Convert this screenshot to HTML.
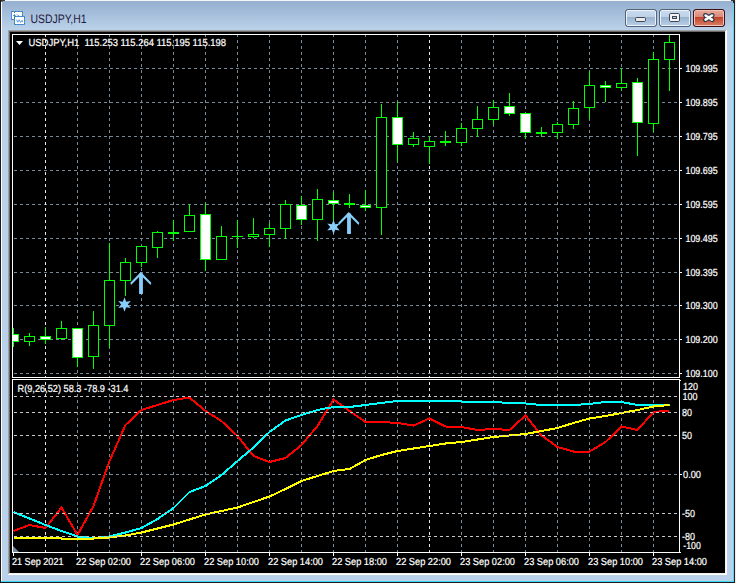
<!DOCTYPE html><html><head><meta charset="utf-8"><style>html,body{margin:0;padding:0;width:736px;height:583px;overflow:hidden;background:#fff}svg{display:block;text-rendering:geometricPrecision}</style></head><body><svg width="736" height="583" viewBox="0 0 736 583" shape-rendering="crispEdges"><defs><linearGradient id="tg" x1="0" y1="0" x2="0" y2="1"><stop offset="0" stop-color="#95afcf"/><stop offset="1" stop-color="#bbd2ea"/></linearGradient><linearGradient id="bt" x1="0" y1="0" x2="0" y2="1"><stop offset="0" stop-color="#c9daee"/><stop offset="1" stop-color="#bdd1e7"/></linearGradient><linearGradient id="bb" x1="0" y1="0" x2="0" y2="1"><stop offset="0" stop-color="#98b2cf"/><stop offset="1" stop-color="#b8cde5"/></linearGradient><linearGradient id="ct" x1="0" y1="0" x2="0" y2="1"><stop offset="0" stop-color="#e6a595"/><stop offset="1" stop-color="#d9897a"/></linearGradient><linearGradient id="cb" x1="0" y1="0" x2="0" y2="1"><stop offset="0" stop-color="#c23f26"/><stop offset="1" stop-color="#d77a5f"/></linearGradient><clipPath id="cm"><rect x="13" y="35" width="666" height="342"/></clipPath><clipPath id="ci"><rect x="13" y="380" width="666" height="172"/></clipPath></defs><rect x="0" y="0" width="736" height="583" fill="#b9d1ea"/><rect x="0" y="0" width="736" height="1" fill="#f4f6f8"/><rect x="1" y="1" width="732" height="29" fill="url(#tg)"/><rect x="0" y="0" width="1" height="583" fill="#1a1a1a"/><rect x="1" y="0" width="4" height="1" fill="#3a3a3a"/><rect x="1" y="1" width="2" height="1" fill="#6a6a6a"/><rect x="1" y="2" width="1" height="579" fill="#ffffff"/><rect x="733" y="3" width="1" height="579" fill="#5ad6f2"/><rect x="733" y="1" width="1" height="2" fill="#202020"/><rect x="1" y="581" width="733" height="1" fill="#3ad8f4"/><rect x="734" y="0" width="1" height="583" fill="#202020"/><rect x="0" y="582" width="735" height="1" fill="#1a1a1a"/><rect x="735" y="0" width="1" height="583" fill="#eeeeee"/><rect x="731" y="0" width="4" height="1" fill="#303030"/><rect x="8" y="30" width="719" height="1" fill="#a0a0a0"/><rect x="8" y="30" width="1" height="545" fill="#a0a0a0"/><rect x="9" y="31" width="717" height="1" fill="#696969"/><rect x="9" y="31" width="1" height="543" fill="#696969"/><rect x="725" y="31" width="1" height="543" fill="#f0f0f0"/><rect x="9" y="573" width="717" height="1" fill="#f0f0f0"/><rect x="726" y="30" width="1" height="545" fill="#ffffff"/><rect x="8" y="574" width="719" height="1" fill="#ffffff"/><rect x="10" y="32" width="715" height="541" fill="#000000"/><rect x="11" y="11" width="12" height="9" fill="#4a8cf6"/><rect x="12" y="12" width="10" height="7" fill="#ffffff"/><rect x="14" y="16" width="11" height="9" fill="#4a8cf6"/><rect x="15" y="17" width="9" height="7" fill="#ffffff"/><path d="M12 11.5h10M12 19.5h2M14.5 12v7M22.5 12v4M15 16.5h9M15 24.5h9M14.5 17v7M24.5 17v7" stroke="#3c8a60" stroke-width="1" stroke-dasharray="1 2" fill="none"/><path d="M13.2 16 L14.4 14.6 L15.6 15.6 M16.8 14.4 L18 15.6 L19.2 16" stroke="#3f82ee" stroke-width="0.9" fill="none" shape-rendering="auto"/><path d="M16.4 19.6 L17.8 22.2 L19.2 19.8 L20.6 22.4 L22 20.4 L22.8 22" stroke="#3f82ee" stroke-width="0.85" fill="none" shape-rendering="auto"/><text x="30.5" y="23" font-family="Liberation Sans, sans-serif" font-size="12.2" fill="#1e2040" textLength="56" lengthAdjust="spacingAndGlyphs">USDJPY,H1</text><rect x="625.5" y="9.5" width="31" height="17" rx="2.5" fill="#56657a" stroke="#56657a" shape-rendering="auto"/><rect x="626.5" y="10.5" width="29" height="15" rx="1.5" fill="none" stroke="#e9f1fa" shape-rendering="auto"/><rect x="627" y="11" width="28" height="6" fill="url(#bt)"/><rect x="627" y="17" width="28" height="8" fill="url(#bb)"/><rect x="659.5" y="9.5" width="31" height="17" rx="2.5" fill="#56657a" stroke="#56657a" shape-rendering="auto"/><rect x="660.5" y="10.5" width="29" height="15" rx="1.5" fill="none" stroke="#e9f1fa" shape-rendering="auto"/><rect x="661" y="11" width="28" height="6" fill="url(#bt)"/><rect x="661" y="17" width="28" height="8" fill="url(#bb)"/><rect x="693.5" y="9.5" width="31" height="17" rx="2.5" fill="#3e0f15" stroke="#3e0f15" shape-rendering="auto"/><rect x="694.5" y="10.5" width="29" height="15" rx="1.5" fill="none" stroke="#f0c4b8" shape-rendering="auto"/><rect x="695" y="11" width="28" height="6" fill="url(#ct)"/><rect x="695" y="17" width="28" height="8" fill="url(#cb)"/><rect x="635.5" y="17.5" width="10" height="4" rx="1.2" fill="#ececec" stroke="#3c4858" stroke-width="1" shape-rendering="auto"/><rect x="669.5" y="13.5" width="10" height="8" rx="1.2" fill="#f4f4f4" stroke="#3c4858" stroke-width="1" shape-rendering="auto"/><rect x="672.5" y="16.5" width="4" height="2" fill="#b9c9da" stroke="#3c4858" stroke-width="1" shape-rendering="crispEdges"/><path d="M705.3 15.3 L712.3 19.8 M712.3 15.3 L705.3 19.8" stroke="#2e3a4a" stroke-width="4.6" stroke-linecap="round" fill="none" shape-rendering="auto"/><path d="M705.6 15.5 L712 19.6 M712 15.5 L705.6 19.6" stroke="#ffffff" stroke-width="2.6" stroke-linecap="round" fill="none" shape-rendering="auto"/><path d="M14 68.5H17M20 68.5H23M26 68.5H29M32 68.5H35M38 68.5H41M44 68.5H47M50 68.5H53M56 68.5H59M62 68.5H65M68 68.5H71M74 68.5H77M80 68.5H83M86 68.5H89M92 68.5H95M98 68.5H101M104 68.5H107M110 68.5H113M116 68.5H119M122 68.5H125M128 68.5H131M134 68.5H137M140 68.5H143M146 68.5H149M152 68.5H155M158 68.5H161M164 68.5H167M170 68.5H173M176 68.5H179M182 68.5H185M188 68.5H191M194 68.5H197M200 68.5H203M206 68.5H209M212 68.5H215M218 68.5H221M224 68.5H227M230 68.5H233M236 68.5H239M242 68.5H245M248 68.5H251M254 68.5H257M260 68.5H263M266 68.5H269M272 68.5H275M278 68.5H281M284 68.5H287M290 68.5H293M296 68.5H299M302 68.5H305M308 68.5H311M314 68.5H317M320 68.5H323M326 68.5H329M332 68.5H335M338 68.5H341M344 68.5H347M350 68.5H353M356 68.5H359M362 68.5H365M368 68.5H371M374 68.5H377M380 68.5H383M386 68.5H389M392 68.5H395M398 68.5H401M404 68.5H407M410 68.5H413M416 68.5H419M422 68.5H425M428 68.5H431M434 68.5H437M440 68.5H443M446 68.5H449M452 68.5H455M458 68.5H461M464 68.5H467M470 68.5H473M476 68.5H479M482 68.5H485M488 68.5H491M494 68.5H497M500 68.5H503M506 68.5H509M512 68.5H515M518 68.5H521M524 68.5H527M530 68.5H533M536 68.5H539M542 68.5H545M548 68.5H551M554 68.5H557M560 68.5H563M566 68.5H569M572 68.5H575M578 68.5H581M584 68.5H587M590 68.5H593M596 68.5H599M602 68.5H605M608 68.5H611M614 68.5H617M620 68.5H623M626 68.5H629M632 68.5H635M638 68.5H641M644 68.5H647M650 68.5H653M656 68.5H659M662 68.5H665M668 68.5H671M674 68.5H677" stroke="#778899" stroke-width="1" fill="none"/><path d="M14 102.5H17M20 102.5H23M26 102.5H29M32 102.5H35M38 102.5H41M44 102.5H47M50 102.5H53M56 102.5H59M62 102.5H65M68 102.5H71M74 102.5H77M80 102.5H83M86 102.5H89M92 102.5H95M98 102.5H101M104 102.5H107M110 102.5H113M116 102.5H119M122 102.5H125M128 102.5H131M134 102.5H137M140 102.5H143M146 102.5H149M152 102.5H155M158 102.5H161M164 102.5H167M170 102.5H173M176 102.5H179M182 102.5H185M188 102.5H191M194 102.5H197M200 102.5H203M206 102.5H209M212 102.5H215M218 102.5H221M224 102.5H227M230 102.5H233M236 102.5H239M242 102.5H245M248 102.5H251M254 102.5H257M260 102.5H263M266 102.5H269M272 102.5H275M278 102.5H281M284 102.5H287M290 102.5H293M296 102.5H299M302 102.5H305M308 102.5H311M314 102.5H317M320 102.5H323M326 102.5H329M332 102.5H335M338 102.5H341M344 102.5H347M350 102.5H353M356 102.5H359M362 102.5H365M368 102.5H371M374 102.5H377M380 102.5H383M386 102.5H389M392 102.5H395M398 102.5H401M404 102.5H407M410 102.5H413M416 102.5H419M422 102.5H425M428 102.5H431M434 102.5H437M440 102.5H443M446 102.5H449M452 102.5H455M458 102.5H461M464 102.5H467M470 102.5H473M476 102.5H479M482 102.5H485M488 102.5H491M494 102.5H497M500 102.5H503M506 102.5H509M512 102.5H515M518 102.5H521M524 102.5H527M530 102.5H533M536 102.5H539M542 102.5H545M548 102.5H551M554 102.5H557M560 102.5H563M566 102.5H569M572 102.5H575M578 102.5H581M584 102.5H587M590 102.5H593M596 102.5H599M602 102.5H605M608 102.5H611M614 102.5H617M620 102.5H623M626 102.5H629M632 102.5H635M638 102.5H641M644 102.5H647M650 102.5H653M656 102.5H659M662 102.5H665M668 102.5H671M674 102.5H677" stroke="#778899" stroke-width="1" fill="none"/><path d="M14 136.5H17M20 136.5H23M26 136.5H29M32 136.5H35M38 136.5H41M44 136.5H47M50 136.5H53M56 136.5H59M62 136.5H65M68 136.5H71M74 136.5H77M80 136.5H83M86 136.5H89M92 136.5H95M98 136.5H101M104 136.5H107M110 136.5H113M116 136.5H119M122 136.5H125M128 136.5H131M134 136.5H137M140 136.5H143M146 136.5H149M152 136.5H155M158 136.5H161M164 136.5H167M170 136.5H173M176 136.5H179M182 136.5H185M188 136.5H191M194 136.5H197M200 136.5H203M206 136.5H209M212 136.5H215M218 136.5H221M224 136.5H227M230 136.5H233M236 136.5H239M242 136.5H245M248 136.5H251M254 136.5H257M260 136.5H263M266 136.5H269M272 136.5H275M278 136.5H281M284 136.5H287M290 136.5H293M296 136.5H299M302 136.5H305M308 136.5H311M314 136.5H317M320 136.5H323M326 136.5H329M332 136.5H335M338 136.5H341M344 136.5H347M350 136.5H353M356 136.5H359M362 136.5H365M368 136.5H371M374 136.5H377M380 136.5H383M386 136.5H389M392 136.5H395M398 136.5H401M404 136.5H407M410 136.5H413M416 136.5H419M422 136.5H425M428 136.5H431M434 136.5H437M440 136.5H443M446 136.5H449M452 136.5H455M458 136.5H461M464 136.5H467M470 136.5H473M476 136.5H479M482 136.5H485M488 136.5H491M494 136.5H497M500 136.5H503M506 136.5H509M512 136.5H515M518 136.5H521M524 136.5H527M530 136.5H533M536 136.5H539M542 136.5H545M548 136.5H551M554 136.5H557M560 136.5H563M566 136.5H569M572 136.5H575M578 136.5H581M584 136.5H587M590 136.5H593M596 136.5H599M602 136.5H605M608 136.5H611M614 136.5H617M620 136.5H623M626 136.5H629M632 136.5H635M638 136.5H641M644 136.5H647M650 136.5H653M656 136.5H659M662 136.5H665M668 136.5H671M674 136.5H677" stroke="#778899" stroke-width="1" fill="none"/><path d="M14 170.5H17M20 170.5H23M26 170.5H29M32 170.5H35M38 170.5H41M44 170.5H47M50 170.5H53M56 170.5H59M62 170.5H65M68 170.5H71M74 170.5H77M80 170.5H83M86 170.5H89M92 170.5H95M98 170.5H101M104 170.5H107M110 170.5H113M116 170.5H119M122 170.5H125M128 170.5H131M134 170.5H137M140 170.5H143M146 170.5H149M152 170.5H155M158 170.5H161M164 170.5H167M170 170.5H173M176 170.5H179M182 170.5H185M188 170.5H191M194 170.5H197M200 170.5H203M206 170.5H209M212 170.5H215M218 170.5H221M224 170.5H227M230 170.5H233M236 170.5H239M242 170.5H245M248 170.5H251M254 170.5H257M260 170.5H263M266 170.5H269M272 170.5H275M278 170.5H281M284 170.5H287M290 170.5H293M296 170.5H299M302 170.5H305M308 170.5H311M314 170.5H317M320 170.5H323M326 170.5H329M332 170.5H335M338 170.5H341M344 170.5H347M350 170.5H353M356 170.5H359M362 170.5H365M368 170.5H371M374 170.5H377M380 170.5H383M386 170.5H389M392 170.5H395M398 170.5H401M404 170.5H407M410 170.5H413M416 170.5H419M422 170.5H425M428 170.5H431M434 170.5H437M440 170.5H443M446 170.5H449M452 170.5H455M458 170.5H461M464 170.5H467M470 170.5H473M476 170.5H479M482 170.5H485M488 170.5H491M494 170.5H497M500 170.5H503M506 170.5H509M512 170.5H515M518 170.5H521M524 170.5H527M530 170.5H533M536 170.5H539M542 170.5H545M548 170.5H551M554 170.5H557M560 170.5H563M566 170.5H569M572 170.5H575M578 170.5H581M584 170.5H587M590 170.5H593M596 170.5H599M602 170.5H605M608 170.5H611M614 170.5H617M620 170.5H623M626 170.5H629M632 170.5H635M638 170.5H641M644 170.5H647M650 170.5H653M656 170.5H659M662 170.5H665M668 170.5H671M674 170.5H677" stroke="#778899" stroke-width="1" fill="none"/><path d="M14 204.5H17M20 204.5H23M26 204.5H29M32 204.5H35M38 204.5H41M44 204.5H47M50 204.5H53M56 204.5H59M62 204.5H65M68 204.5H71M74 204.5H77M80 204.5H83M86 204.5H89M92 204.5H95M98 204.5H101M104 204.5H107M110 204.5H113M116 204.5H119M122 204.5H125M128 204.5H131M134 204.5H137M140 204.5H143M146 204.5H149M152 204.5H155M158 204.5H161M164 204.5H167M170 204.5H173M176 204.5H179M182 204.5H185M188 204.5H191M194 204.5H197M200 204.5H203M206 204.5H209M212 204.5H215M218 204.5H221M224 204.5H227M230 204.5H233M236 204.5H239M242 204.5H245M248 204.5H251M254 204.5H257M260 204.5H263M266 204.5H269M272 204.5H275M278 204.5H281M284 204.5H287M290 204.5H293M296 204.5H299M302 204.5H305M308 204.5H311M314 204.5H317M320 204.5H323M326 204.5H329M332 204.5H335M338 204.5H341M344 204.5H347M350 204.5H353M356 204.5H359M362 204.5H365M368 204.5H371M374 204.5H377M380 204.5H383M386 204.5H389M392 204.5H395M398 204.5H401M404 204.5H407M410 204.5H413M416 204.5H419M422 204.5H425M428 204.5H431M434 204.5H437M440 204.5H443M446 204.5H449M452 204.5H455M458 204.5H461M464 204.5H467M470 204.5H473M476 204.5H479M482 204.5H485M488 204.5H491M494 204.5H497M500 204.5H503M506 204.5H509M512 204.5H515M518 204.5H521M524 204.5H527M530 204.5H533M536 204.5H539M542 204.5H545M548 204.5H551M554 204.5H557M560 204.5H563M566 204.5H569M572 204.5H575M578 204.5H581M584 204.5H587M590 204.5H593M596 204.5H599M602 204.5H605M608 204.5H611M614 204.5H617M620 204.5H623M626 204.5H629M632 204.5H635M638 204.5H641M644 204.5H647M650 204.5H653M656 204.5H659M662 204.5H665M668 204.5H671M674 204.5H677" stroke="#778899" stroke-width="1" fill="none"/><path d="M14 238.5H17M20 238.5H23M26 238.5H29M32 238.5H35M38 238.5H41M44 238.5H47M50 238.5H53M56 238.5H59M62 238.5H65M68 238.5H71M74 238.5H77M80 238.5H83M86 238.5H89M92 238.5H95M98 238.5H101M104 238.5H107M110 238.5H113M116 238.5H119M122 238.5H125M128 238.5H131M134 238.5H137M140 238.5H143M146 238.5H149M152 238.5H155M158 238.5H161M164 238.5H167M170 238.5H173M176 238.5H179M182 238.5H185M188 238.5H191M194 238.5H197M200 238.5H203M206 238.5H209M212 238.5H215M218 238.5H221M224 238.5H227M230 238.5H233M236 238.5H239M242 238.5H245M248 238.5H251M254 238.5H257M260 238.5H263M266 238.5H269M272 238.5H275M278 238.5H281M284 238.5H287M290 238.5H293M296 238.5H299M302 238.5H305M308 238.5H311M314 238.5H317M320 238.5H323M326 238.5H329M332 238.5H335M338 238.5H341M344 238.5H347M350 238.5H353M356 238.5H359M362 238.5H365M368 238.5H371M374 238.5H377M380 238.5H383M386 238.5H389M392 238.5H395M398 238.5H401M404 238.5H407M410 238.5H413M416 238.5H419M422 238.5H425M428 238.5H431M434 238.5H437M440 238.5H443M446 238.5H449M452 238.5H455M458 238.5H461M464 238.5H467M470 238.5H473M476 238.5H479M482 238.5H485M488 238.5H491M494 238.5H497M500 238.5H503M506 238.5H509M512 238.5H515M518 238.5H521M524 238.5H527M530 238.5H533M536 238.5H539M542 238.5H545M548 238.5H551M554 238.5H557M560 238.5H563M566 238.5H569M572 238.5H575M578 238.5H581M584 238.5H587M590 238.5H593M596 238.5H599M602 238.5H605M608 238.5H611M614 238.5H617M620 238.5H623M626 238.5H629M632 238.5H635M638 238.5H641M644 238.5H647M650 238.5H653M656 238.5H659M662 238.5H665M668 238.5H671M674 238.5H677" stroke="#778899" stroke-width="1" fill="none"/><path d="M14 272.5H17M20 272.5H23M26 272.5H29M32 272.5H35M38 272.5H41M44 272.5H47M50 272.5H53M56 272.5H59M62 272.5H65M68 272.5H71M74 272.5H77M80 272.5H83M86 272.5H89M92 272.5H95M98 272.5H101M104 272.5H107M110 272.5H113M116 272.5H119M122 272.5H125M128 272.5H131M134 272.5H137M140 272.5H143M146 272.5H149M152 272.5H155M158 272.5H161M164 272.5H167M170 272.5H173M176 272.5H179M182 272.5H185M188 272.5H191M194 272.5H197M200 272.5H203M206 272.5H209M212 272.5H215M218 272.5H221M224 272.5H227M230 272.5H233M236 272.5H239M242 272.5H245M248 272.5H251M254 272.5H257M260 272.5H263M266 272.5H269M272 272.5H275M278 272.5H281M284 272.5H287M290 272.5H293M296 272.5H299M302 272.5H305M308 272.5H311M314 272.5H317M320 272.5H323M326 272.5H329M332 272.5H335M338 272.5H341M344 272.5H347M350 272.5H353M356 272.5H359M362 272.5H365M368 272.5H371M374 272.5H377M380 272.5H383M386 272.5H389M392 272.5H395M398 272.5H401M404 272.5H407M410 272.5H413M416 272.5H419M422 272.5H425M428 272.5H431M434 272.5H437M440 272.5H443M446 272.5H449M452 272.5H455M458 272.5H461M464 272.5H467M470 272.5H473M476 272.5H479M482 272.5H485M488 272.5H491M494 272.5H497M500 272.5H503M506 272.5H509M512 272.5H515M518 272.5H521M524 272.5H527M530 272.5H533M536 272.5H539M542 272.5H545M548 272.5H551M554 272.5H557M560 272.5H563M566 272.5H569M572 272.5H575M578 272.5H581M584 272.5H587M590 272.5H593M596 272.5H599M602 272.5H605M608 272.5H611M614 272.5H617M620 272.5H623M626 272.5H629M632 272.5H635M638 272.5H641M644 272.5H647M650 272.5H653M656 272.5H659M662 272.5H665M668 272.5H671M674 272.5H677" stroke="#778899" stroke-width="1" fill="none"/><path d="M14 305.5H17M20 305.5H23M26 305.5H29M32 305.5H35M38 305.5H41M44 305.5H47M50 305.5H53M56 305.5H59M62 305.5H65M68 305.5H71M74 305.5H77M80 305.5H83M86 305.5H89M92 305.5H95M98 305.5H101M104 305.5H107M110 305.5H113M116 305.5H119M122 305.5H125M128 305.5H131M134 305.5H137M140 305.5H143M146 305.5H149M152 305.5H155M158 305.5H161M164 305.5H167M170 305.5H173M176 305.5H179M182 305.5H185M188 305.5H191M194 305.5H197M200 305.5H203M206 305.5H209M212 305.5H215M218 305.5H221M224 305.5H227M230 305.5H233M236 305.5H239M242 305.5H245M248 305.5H251M254 305.5H257M260 305.5H263M266 305.5H269M272 305.5H275M278 305.5H281M284 305.5H287M290 305.5H293M296 305.5H299M302 305.5H305M308 305.5H311M314 305.5H317M320 305.5H323M326 305.5H329M332 305.5H335M338 305.5H341M344 305.5H347M350 305.5H353M356 305.5H359M362 305.5H365M368 305.5H371M374 305.5H377M380 305.5H383M386 305.5H389M392 305.5H395M398 305.5H401M404 305.5H407M410 305.5H413M416 305.5H419M422 305.5H425M428 305.5H431M434 305.5H437M440 305.5H443M446 305.5H449M452 305.5H455M458 305.5H461M464 305.5H467M470 305.5H473M476 305.5H479M482 305.5H485M488 305.5H491M494 305.5H497M500 305.5H503M506 305.5H509M512 305.5H515M518 305.5H521M524 305.5H527M530 305.5H533M536 305.5H539M542 305.5H545M548 305.5H551M554 305.5H557M560 305.5H563M566 305.5H569M572 305.5H575M578 305.5H581M584 305.5H587M590 305.5H593M596 305.5H599M602 305.5H605M608 305.5H611M614 305.5H617M620 305.5H623M626 305.5H629M632 305.5H635M638 305.5H641M644 305.5H647M650 305.5H653M656 305.5H659M662 305.5H665M668 305.5H671M674 305.5H677" stroke="#778899" stroke-width="1" fill="none"/><path d="M14 339.5H17M20 339.5H23M26 339.5H29M32 339.5H35M38 339.5H41M44 339.5H47M50 339.5H53M56 339.5H59M62 339.5H65M68 339.5H71M74 339.5H77M80 339.5H83M86 339.5H89M92 339.5H95M98 339.5H101M104 339.5H107M110 339.5H113M116 339.5H119M122 339.5H125M128 339.5H131M134 339.5H137M140 339.5H143M146 339.5H149M152 339.5H155M158 339.5H161M164 339.5H167M170 339.5H173M176 339.5H179M182 339.5H185M188 339.5H191M194 339.5H197M200 339.5H203M206 339.5H209M212 339.5H215M218 339.5H221M224 339.5H227M230 339.5H233M236 339.5H239M242 339.5H245M248 339.5H251M254 339.5H257M260 339.5H263M266 339.5H269M272 339.5H275M278 339.5H281M284 339.5H287M290 339.5H293M296 339.5H299M302 339.5H305M308 339.5H311M314 339.5H317M320 339.5H323M326 339.5H329M332 339.5H335M338 339.5H341M344 339.5H347M350 339.5H353M356 339.5H359M362 339.5H365M368 339.5H371M374 339.5H377M380 339.5H383M386 339.5H389M392 339.5H395M398 339.5H401M404 339.5H407M410 339.5H413M416 339.5H419M422 339.5H425M428 339.5H431M434 339.5H437M440 339.5H443M446 339.5H449M452 339.5H455M458 339.5H461M464 339.5H467M470 339.5H473M476 339.5H479M482 339.5H485M488 339.5H491M494 339.5H497M500 339.5H503M506 339.5H509M512 339.5H515M518 339.5H521M524 339.5H527M530 339.5H533M536 339.5H539M542 339.5H545M548 339.5H551M554 339.5H557M560 339.5H563M566 339.5H569M572 339.5H575M578 339.5H581M584 339.5H587M590 339.5H593M596 339.5H599M602 339.5H605M608 339.5H611M614 339.5H617M620 339.5H623M626 339.5H629M632 339.5H635M638 339.5H641M644 339.5H647M650 339.5H653M656 339.5H659M662 339.5H665M668 339.5H671M674 339.5H677" stroke="#778899" stroke-width="1" fill="none"/><path d="M14 373.5H17M20 373.5H23M26 373.5H29M32 373.5H35M38 373.5H41M44 373.5H47M50 373.5H53M56 373.5H59M62 373.5H65M68 373.5H71M74 373.5H77M80 373.5H83M86 373.5H89M92 373.5H95M98 373.5H101M104 373.5H107M110 373.5H113M116 373.5H119M122 373.5H125M128 373.5H131M134 373.5H137M140 373.5H143M146 373.5H149M152 373.5H155M158 373.5H161M164 373.5H167M170 373.5H173M176 373.5H179M182 373.5H185M188 373.5H191M194 373.5H197M200 373.5H203M206 373.5H209M212 373.5H215M218 373.5H221M224 373.5H227M230 373.5H233M236 373.5H239M242 373.5H245M248 373.5H251M254 373.5H257M260 373.5H263M266 373.5H269M272 373.5H275M278 373.5H281M284 373.5H287M290 373.5H293M296 373.5H299M302 373.5H305M308 373.5H311M314 373.5H317M320 373.5H323M326 373.5H329M332 373.5H335M338 373.5H341M344 373.5H347M350 373.5H353M356 373.5H359M362 373.5H365M368 373.5H371M374 373.5H377M380 373.5H383M386 373.5H389M392 373.5H395M398 373.5H401M404 373.5H407M410 373.5H413M416 373.5H419M422 373.5H425M428 373.5H431M434 373.5H437M440 373.5H443M446 373.5H449M452 373.5H455M458 373.5H461M464 373.5H467M470 373.5H473M476 373.5H479M482 373.5H485M488 373.5H491M494 373.5H497M500 373.5H503M506 373.5H509M512 373.5H515M518 373.5H521M524 373.5H527M530 373.5H533M536 373.5H539M542 373.5H545M548 373.5H551M554 373.5H557M560 373.5H563M566 373.5H569M572 373.5H575M578 373.5H581M584 373.5H587M590 373.5H593M596 373.5H599M602 373.5H605M608 373.5H611M614 373.5H617M620 373.5H623M626 373.5H629M632 373.5H635M638 373.5H641M644 373.5H647M650 373.5H653M656 373.5H659M662 373.5H665M668 373.5H671M674 373.5H677" stroke="#778899" stroke-width="1" fill="none"/><path d="M45.5 35V37M45.5 40V43M45.5 46V49M45.5 52V55M45.5 58V61M45.5 64V67M45.5 70V73M45.5 76V79M45.5 82V85M45.5 88V91M45.5 94V97M45.5 100V103M45.5 106V109M45.5 112V115M45.5 118V121M45.5 124V127M45.5 130V133M45.5 136V139M45.5 142V145M45.5 148V151M45.5 154V157M45.5 160V163M45.5 166V169M45.5 172V175M45.5 178V181M45.5 184V187M45.5 190V193M45.5 196V199M45.5 202V205M45.5 208V211M45.5 214V217M45.5 220V223M45.5 226V229M45.5 232V235M45.5 238V241M45.5 244V247M45.5 250V253M45.5 256V259M45.5 262V265M45.5 268V271M45.5 274V277M45.5 280V283M45.5 286V289M45.5 292V295M45.5 298V301M45.5 304V307M45.5 310V313M45.5 316V319M45.5 322V325M45.5 328V331M45.5 334V337M45.5 340V343M45.5 346V349M45.5 352V355M45.5 358V361M45.5 364V367M45.5 370V373M45.5 376V377" stroke="#e8e8e8" stroke-width="1" fill="none"/><path d="M45.5 382V385M45.5 388V391M45.5 394V397M45.5 400V403M45.5 406V409M45.5 412V415M45.5 418V421M45.5 424V427M45.5 430V433M45.5 436V439M45.5 442V445M45.5 448V451M45.5 454V457M45.5 460V463M45.5 466V469M45.5 472V475M45.5 478V481M45.5 484V487M45.5 490V493M45.5 496V499M45.5 502V505M45.5 508V511M45.5 514V517M45.5 520V523M45.5 526V529M45.5 532V535M45.5 538V541M45.5 544V547M45.5 550V552" stroke="#e8e8e8" stroke-width="1" fill="none"/><path d="M77.5 35V37M77.5 40V43M77.5 46V49M77.5 52V55M77.5 58V61M77.5 64V67M77.5 70V73M77.5 76V79M77.5 82V85M77.5 88V91M77.5 94V97M77.5 100V103M77.5 106V109M77.5 112V115M77.5 118V121M77.5 124V127M77.5 130V133M77.5 136V139M77.5 142V145M77.5 148V151M77.5 154V157M77.5 160V163M77.5 166V169M77.5 172V175M77.5 178V181M77.5 184V187M77.5 190V193M77.5 196V199M77.5 202V205M77.5 208V211M77.5 214V217M77.5 220V223M77.5 226V229M77.5 232V235M77.5 238V241M77.5 244V247M77.5 250V253M77.5 256V259M77.5 262V265M77.5 268V271M77.5 274V277M77.5 280V283M77.5 286V289M77.5 292V295M77.5 298V301M77.5 304V307M77.5 310V313M77.5 316V319M77.5 322V325M77.5 328V331M77.5 334V337M77.5 340V343M77.5 346V349M77.5 352V355M77.5 358V361M77.5 364V367M77.5 370V373M77.5 376V377" stroke="#778899" stroke-width="1" fill="none"/><path d="M77.5 382V385M77.5 388V391M77.5 394V397M77.5 400V403M77.5 406V409M77.5 412V415M77.5 418V421M77.5 424V427M77.5 430V433M77.5 436V439M77.5 442V445M77.5 448V451M77.5 454V457M77.5 460V463M77.5 466V469M77.5 472V475M77.5 478V481M77.5 484V487M77.5 490V493M77.5 496V499M77.5 502V505M77.5 508V511M77.5 514V517M77.5 520V523M77.5 526V529M77.5 532V535M77.5 538V541M77.5 544V547M77.5 550V552" stroke="#778899" stroke-width="1" fill="none"/><path d="M109.5 35V37M109.5 40V43M109.5 46V49M109.5 52V55M109.5 58V61M109.5 64V67M109.5 70V73M109.5 76V79M109.5 82V85M109.5 88V91M109.5 94V97M109.5 100V103M109.5 106V109M109.5 112V115M109.5 118V121M109.5 124V127M109.5 130V133M109.5 136V139M109.5 142V145M109.5 148V151M109.5 154V157M109.5 160V163M109.5 166V169M109.5 172V175M109.5 178V181M109.5 184V187M109.5 190V193M109.5 196V199M109.5 202V205M109.5 208V211M109.5 214V217M109.5 220V223M109.5 226V229M109.5 232V235M109.5 238V241M109.5 244V247M109.5 250V253M109.5 256V259M109.5 262V265M109.5 268V271M109.5 274V277M109.5 280V283M109.5 286V289M109.5 292V295M109.5 298V301M109.5 304V307M109.5 310V313M109.5 316V319M109.5 322V325M109.5 328V331M109.5 334V337M109.5 340V343M109.5 346V349M109.5 352V355M109.5 358V361M109.5 364V367M109.5 370V373M109.5 376V377" stroke="#778899" stroke-width="1" fill="none"/><path d="M109.5 382V385M109.5 388V391M109.5 394V397M109.5 400V403M109.5 406V409M109.5 412V415M109.5 418V421M109.5 424V427M109.5 430V433M109.5 436V439M109.5 442V445M109.5 448V451M109.5 454V457M109.5 460V463M109.5 466V469M109.5 472V475M109.5 478V481M109.5 484V487M109.5 490V493M109.5 496V499M109.5 502V505M109.5 508V511M109.5 514V517M109.5 520V523M109.5 526V529M109.5 532V535M109.5 538V541M109.5 544V547M109.5 550V552" stroke="#778899" stroke-width="1" fill="none"/><path d="M141.5 35V37M141.5 40V43M141.5 46V49M141.5 52V55M141.5 58V61M141.5 64V67M141.5 70V73M141.5 76V79M141.5 82V85M141.5 88V91M141.5 94V97M141.5 100V103M141.5 106V109M141.5 112V115M141.5 118V121M141.5 124V127M141.5 130V133M141.5 136V139M141.5 142V145M141.5 148V151M141.5 154V157M141.5 160V163M141.5 166V169M141.5 172V175M141.5 178V181M141.5 184V187M141.5 190V193M141.5 196V199M141.5 202V205M141.5 208V211M141.5 214V217M141.5 220V223M141.5 226V229M141.5 232V235M141.5 238V241M141.5 244V247M141.5 250V253M141.5 256V259M141.5 262V265M141.5 268V271M141.5 274V277M141.5 280V283M141.5 286V289M141.5 292V295M141.5 298V301M141.5 304V307M141.5 310V313M141.5 316V319M141.5 322V325M141.5 328V331M141.5 334V337M141.5 340V343M141.5 346V349M141.5 352V355M141.5 358V361M141.5 364V367M141.5 370V373M141.5 376V377" stroke="#778899" stroke-width="1" fill="none"/><path d="M141.5 382V385M141.5 388V391M141.5 394V397M141.5 400V403M141.5 406V409M141.5 412V415M141.5 418V421M141.5 424V427M141.5 430V433M141.5 436V439M141.5 442V445M141.5 448V451M141.5 454V457M141.5 460V463M141.5 466V469M141.5 472V475M141.5 478V481M141.5 484V487M141.5 490V493M141.5 496V499M141.5 502V505M141.5 508V511M141.5 514V517M141.5 520V523M141.5 526V529M141.5 532V535M141.5 538V541M141.5 544V547M141.5 550V552" stroke="#778899" stroke-width="1" fill="none"/><path d="M173.5 35V37M173.5 40V43M173.5 46V49M173.5 52V55M173.5 58V61M173.5 64V67M173.5 70V73M173.5 76V79M173.5 82V85M173.5 88V91M173.5 94V97M173.5 100V103M173.5 106V109M173.5 112V115M173.5 118V121M173.5 124V127M173.5 130V133M173.5 136V139M173.5 142V145M173.5 148V151M173.5 154V157M173.5 160V163M173.5 166V169M173.5 172V175M173.5 178V181M173.5 184V187M173.5 190V193M173.5 196V199M173.5 202V205M173.5 208V211M173.5 214V217M173.5 220V223M173.5 226V229M173.5 232V235M173.5 238V241M173.5 244V247M173.5 250V253M173.5 256V259M173.5 262V265M173.5 268V271M173.5 274V277M173.5 280V283M173.5 286V289M173.5 292V295M173.5 298V301M173.5 304V307M173.5 310V313M173.5 316V319M173.5 322V325M173.5 328V331M173.5 334V337M173.5 340V343M173.5 346V349M173.5 352V355M173.5 358V361M173.5 364V367M173.5 370V373M173.5 376V377" stroke="#778899" stroke-width="1" fill="none"/><path d="M173.5 382V385M173.5 388V391M173.5 394V397M173.5 400V403M173.5 406V409M173.5 412V415M173.5 418V421M173.5 424V427M173.5 430V433M173.5 436V439M173.5 442V445M173.5 448V451M173.5 454V457M173.5 460V463M173.5 466V469M173.5 472V475M173.5 478V481M173.5 484V487M173.5 490V493M173.5 496V499M173.5 502V505M173.5 508V511M173.5 514V517M173.5 520V523M173.5 526V529M173.5 532V535M173.5 538V541M173.5 544V547M173.5 550V552" stroke="#778899" stroke-width="1" fill="none"/><path d="M205.5 35V37M205.5 40V43M205.5 46V49M205.5 52V55M205.5 58V61M205.5 64V67M205.5 70V73M205.5 76V79M205.5 82V85M205.5 88V91M205.5 94V97M205.5 100V103M205.5 106V109M205.5 112V115M205.5 118V121M205.5 124V127M205.5 130V133M205.5 136V139M205.5 142V145M205.5 148V151M205.5 154V157M205.5 160V163M205.5 166V169M205.5 172V175M205.5 178V181M205.5 184V187M205.5 190V193M205.5 196V199M205.5 202V205M205.5 208V211M205.5 214V217M205.5 220V223M205.5 226V229M205.5 232V235M205.5 238V241M205.5 244V247M205.5 250V253M205.5 256V259M205.5 262V265M205.5 268V271M205.5 274V277M205.5 280V283M205.5 286V289M205.5 292V295M205.5 298V301M205.5 304V307M205.5 310V313M205.5 316V319M205.5 322V325M205.5 328V331M205.5 334V337M205.5 340V343M205.5 346V349M205.5 352V355M205.5 358V361M205.5 364V367M205.5 370V373M205.5 376V377" stroke="#778899" stroke-width="1" fill="none"/><path d="M205.5 382V385M205.5 388V391M205.5 394V397M205.5 400V403M205.5 406V409M205.5 412V415M205.5 418V421M205.5 424V427M205.5 430V433M205.5 436V439M205.5 442V445M205.5 448V451M205.5 454V457M205.5 460V463M205.5 466V469M205.5 472V475M205.5 478V481M205.5 484V487M205.5 490V493M205.5 496V499M205.5 502V505M205.5 508V511M205.5 514V517M205.5 520V523M205.5 526V529M205.5 532V535M205.5 538V541M205.5 544V547M205.5 550V552" stroke="#778899" stroke-width="1" fill="none"/><path d="M237.5 35V37M237.5 40V43M237.5 46V49M237.5 52V55M237.5 58V61M237.5 64V67M237.5 70V73M237.5 76V79M237.5 82V85M237.5 88V91M237.5 94V97M237.5 100V103M237.5 106V109M237.5 112V115M237.5 118V121M237.5 124V127M237.5 130V133M237.5 136V139M237.5 142V145M237.5 148V151M237.5 154V157M237.5 160V163M237.5 166V169M237.5 172V175M237.5 178V181M237.5 184V187M237.5 190V193M237.5 196V199M237.5 202V205M237.5 208V211M237.5 214V217M237.5 220V223M237.5 226V229M237.5 232V235M237.5 238V241M237.5 244V247M237.5 250V253M237.5 256V259M237.5 262V265M237.5 268V271M237.5 274V277M237.5 280V283M237.5 286V289M237.5 292V295M237.5 298V301M237.5 304V307M237.5 310V313M237.5 316V319M237.5 322V325M237.5 328V331M237.5 334V337M237.5 340V343M237.5 346V349M237.5 352V355M237.5 358V361M237.5 364V367M237.5 370V373M237.5 376V377" stroke="#778899" stroke-width="1" fill="none"/><path d="M237.5 382V385M237.5 388V391M237.5 394V397M237.5 400V403M237.5 406V409M237.5 412V415M237.5 418V421M237.5 424V427M237.5 430V433M237.5 436V439M237.5 442V445M237.5 448V451M237.5 454V457M237.5 460V463M237.5 466V469M237.5 472V475M237.5 478V481M237.5 484V487M237.5 490V493M237.5 496V499M237.5 502V505M237.5 508V511M237.5 514V517M237.5 520V523M237.5 526V529M237.5 532V535M237.5 538V541M237.5 544V547M237.5 550V552" stroke="#778899" stroke-width="1" fill="none"/><path d="M269.5 35V37M269.5 40V43M269.5 46V49M269.5 52V55M269.5 58V61M269.5 64V67M269.5 70V73M269.5 76V79M269.5 82V85M269.5 88V91M269.5 94V97M269.5 100V103M269.5 106V109M269.5 112V115M269.5 118V121M269.5 124V127M269.5 130V133M269.5 136V139M269.5 142V145M269.5 148V151M269.5 154V157M269.5 160V163M269.5 166V169M269.5 172V175M269.5 178V181M269.5 184V187M269.5 190V193M269.5 196V199M269.5 202V205M269.5 208V211M269.5 214V217M269.5 220V223M269.5 226V229M269.5 232V235M269.5 238V241M269.5 244V247M269.5 250V253M269.5 256V259M269.5 262V265M269.5 268V271M269.5 274V277M269.5 280V283M269.5 286V289M269.5 292V295M269.5 298V301M269.5 304V307M269.5 310V313M269.5 316V319M269.5 322V325M269.5 328V331M269.5 334V337M269.5 340V343M269.5 346V349M269.5 352V355M269.5 358V361M269.5 364V367M269.5 370V373M269.5 376V377" stroke="#778899" stroke-width="1" fill="none"/><path d="M269.5 382V385M269.5 388V391M269.5 394V397M269.5 400V403M269.5 406V409M269.5 412V415M269.5 418V421M269.5 424V427M269.5 430V433M269.5 436V439M269.5 442V445M269.5 448V451M269.5 454V457M269.5 460V463M269.5 466V469M269.5 472V475M269.5 478V481M269.5 484V487M269.5 490V493M269.5 496V499M269.5 502V505M269.5 508V511M269.5 514V517M269.5 520V523M269.5 526V529M269.5 532V535M269.5 538V541M269.5 544V547M269.5 550V552" stroke="#778899" stroke-width="1" fill="none"/><path d="M301.5 35V37M301.5 40V43M301.5 46V49M301.5 52V55M301.5 58V61M301.5 64V67M301.5 70V73M301.5 76V79M301.5 82V85M301.5 88V91M301.5 94V97M301.5 100V103M301.5 106V109M301.5 112V115M301.5 118V121M301.5 124V127M301.5 130V133M301.5 136V139M301.5 142V145M301.5 148V151M301.5 154V157M301.5 160V163M301.5 166V169M301.5 172V175M301.5 178V181M301.5 184V187M301.5 190V193M301.5 196V199M301.5 202V205M301.5 208V211M301.5 214V217M301.5 220V223M301.5 226V229M301.5 232V235M301.5 238V241M301.5 244V247M301.5 250V253M301.5 256V259M301.5 262V265M301.5 268V271M301.5 274V277M301.5 280V283M301.5 286V289M301.5 292V295M301.5 298V301M301.5 304V307M301.5 310V313M301.5 316V319M301.5 322V325M301.5 328V331M301.5 334V337M301.5 340V343M301.5 346V349M301.5 352V355M301.5 358V361M301.5 364V367M301.5 370V373M301.5 376V377" stroke="#778899" stroke-width="1" fill="none"/><path d="M301.5 382V385M301.5 388V391M301.5 394V397M301.5 400V403M301.5 406V409M301.5 412V415M301.5 418V421M301.5 424V427M301.5 430V433M301.5 436V439M301.5 442V445M301.5 448V451M301.5 454V457M301.5 460V463M301.5 466V469M301.5 472V475M301.5 478V481M301.5 484V487M301.5 490V493M301.5 496V499M301.5 502V505M301.5 508V511M301.5 514V517M301.5 520V523M301.5 526V529M301.5 532V535M301.5 538V541M301.5 544V547M301.5 550V552" stroke="#778899" stroke-width="1" fill="none"/><path d="M333.5 35V37M333.5 40V43M333.5 46V49M333.5 52V55M333.5 58V61M333.5 64V67M333.5 70V73M333.5 76V79M333.5 82V85M333.5 88V91M333.5 94V97M333.5 100V103M333.5 106V109M333.5 112V115M333.5 118V121M333.5 124V127M333.5 130V133M333.5 136V139M333.5 142V145M333.5 148V151M333.5 154V157M333.5 160V163M333.5 166V169M333.5 172V175M333.5 178V181M333.5 184V187M333.5 190V193M333.5 196V199M333.5 202V205M333.5 208V211M333.5 214V217M333.5 220V223M333.5 226V229M333.5 232V235M333.5 238V241M333.5 244V247M333.5 250V253M333.5 256V259M333.5 262V265M333.5 268V271M333.5 274V277M333.5 280V283M333.5 286V289M333.5 292V295M333.5 298V301M333.5 304V307M333.5 310V313M333.5 316V319M333.5 322V325M333.5 328V331M333.5 334V337M333.5 340V343M333.5 346V349M333.5 352V355M333.5 358V361M333.5 364V367M333.5 370V373M333.5 376V377" stroke="#778899" stroke-width="1" fill="none"/><path d="M333.5 382V385M333.5 388V391M333.5 394V397M333.5 400V403M333.5 406V409M333.5 412V415M333.5 418V421M333.5 424V427M333.5 430V433M333.5 436V439M333.5 442V445M333.5 448V451M333.5 454V457M333.5 460V463M333.5 466V469M333.5 472V475M333.5 478V481M333.5 484V487M333.5 490V493M333.5 496V499M333.5 502V505M333.5 508V511M333.5 514V517M333.5 520V523M333.5 526V529M333.5 532V535M333.5 538V541M333.5 544V547M333.5 550V552" stroke="#778899" stroke-width="1" fill="none"/><path d="M365.5 35V37M365.5 40V43M365.5 46V49M365.5 52V55M365.5 58V61M365.5 64V67M365.5 70V73M365.5 76V79M365.5 82V85M365.5 88V91M365.5 94V97M365.5 100V103M365.5 106V109M365.5 112V115M365.5 118V121M365.5 124V127M365.5 130V133M365.5 136V139M365.5 142V145M365.5 148V151M365.5 154V157M365.5 160V163M365.5 166V169M365.5 172V175M365.5 178V181M365.5 184V187M365.5 190V193M365.5 196V199M365.5 202V205M365.5 208V211M365.5 214V217M365.5 220V223M365.5 226V229M365.5 232V235M365.5 238V241M365.5 244V247M365.5 250V253M365.5 256V259M365.5 262V265M365.5 268V271M365.5 274V277M365.5 280V283M365.5 286V289M365.5 292V295M365.5 298V301M365.5 304V307M365.5 310V313M365.5 316V319M365.5 322V325M365.5 328V331M365.5 334V337M365.5 340V343M365.5 346V349M365.5 352V355M365.5 358V361M365.5 364V367M365.5 370V373M365.5 376V377" stroke="#778899" stroke-width="1" fill="none"/><path d="M365.5 382V385M365.5 388V391M365.5 394V397M365.5 400V403M365.5 406V409M365.5 412V415M365.5 418V421M365.5 424V427M365.5 430V433M365.5 436V439M365.5 442V445M365.5 448V451M365.5 454V457M365.5 460V463M365.5 466V469M365.5 472V475M365.5 478V481M365.5 484V487M365.5 490V493M365.5 496V499M365.5 502V505M365.5 508V511M365.5 514V517M365.5 520V523M365.5 526V529M365.5 532V535M365.5 538V541M365.5 544V547M365.5 550V552" stroke="#778899" stroke-width="1" fill="none"/><path d="M397.5 35V37M397.5 40V43M397.5 46V49M397.5 52V55M397.5 58V61M397.5 64V67M397.5 70V73M397.5 76V79M397.5 82V85M397.5 88V91M397.5 94V97M397.5 100V103M397.5 106V109M397.5 112V115M397.5 118V121M397.5 124V127M397.5 130V133M397.5 136V139M397.5 142V145M397.5 148V151M397.5 154V157M397.5 160V163M397.5 166V169M397.5 172V175M397.5 178V181M397.5 184V187M397.5 190V193M397.5 196V199M397.5 202V205M397.5 208V211M397.5 214V217M397.5 220V223M397.5 226V229M397.5 232V235M397.5 238V241M397.5 244V247M397.5 250V253M397.5 256V259M397.5 262V265M397.5 268V271M397.5 274V277M397.5 280V283M397.5 286V289M397.5 292V295M397.5 298V301M397.5 304V307M397.5 310V313M397.5 316V319M397.5 322V325M397.5 328V331M397.5 334V337M397.5 340V343M397.5 346V349M397.5 352V355M397.5 358V361M397.5 364V367M397.5 370V373M397.5 376V377" stroke="#778899" stroke-width="1" fill="none"/><path d="M397.5 382V385M397.5 388V391M397.5 394V397M397.5 400V403M397.5 406V409M397.5 412V415M397.5 418V421M397.5 424V427M397.5 430V433M397.5 436V439M397.5 442V445M397.5 448V451M397.5 454V457M397.5 460V463M397.5 466V469M397.5 472V475M397.5 478V481M397.5 484V487M397.5 490V493M397.5 496V499M397.5 502V505M397.5 508V511M397.5 514V517M397.5 520V523M397.5 526V529M397.5 532V535M397.5 538V541M397.5 544V547M397.5 550V552" stroke="#778899" stroke-width="1" fill="none"/><path d="M429.5 35V37M429.5 40V43M429.5 46V49M429.5 52V55M429.5 58V61M429.5 64V67M429.5 70V73M429.5 76V79M429.5 82V85M429.5 88V91M429.5 94V97M429.5 100V103M429.5 106V109M429.5 112V115M429.5 118V121M429.5 124V127M429.5 130V133M429.5 136V139M429.5 142V145M429.5 148V151M429.5 154V157M429.5 160V163M429.5 166V169M429.5 172V175M429.5 178V181M429.5 184V187M429.5 190V193M429.5 196V199M429.5 202V205M429.5 208V211M429.5 214V217M429.5 220V223M429.5 226V229M429.5 232V235M429.5 238V241M429.5 244V247M429.5 250V253M429.5 256V259M429.5 262V265M429.5 268V271M429.5 274V277M429.5 280V283M429.5 286V289M429.5 292V295M429.5 298V301M429.5 304V307M429.5 310V313M429.5 316V319M429.5 322V325M429.5 328V331M429.5 334V337M429.5 340V343M429.5 346V349M429.5 352V355M429.5 358V361M429.5 364V367M429.5 370V373M429.5 376V377" stroke="#e8e8e8" stroke-width="1" fill="none"/><path d="M429.5 382V385M429.5 388V391M429.5 394V397M429.5 400V403M429.5 406V409M429.5 412V415M429.5 418V421M429.5 424V427M429.5 430V433M429.5 436V439M429.5 442V445M429.5 448V451M429.5 454V457M429.5 460V463M429.5 466V469M429.5 472V475M429.5 478V481M429.5 484V487M429.5 490V493M429.5 496V499M429.5 502V505M429.5 508V511M429.5 514V517M429.5 520V523M429.5 526V529M429.5 532V535M429.5 538V541M429.5 544V547M429.5 550V552" stroke="#e8e8e8" stroke-width="1" fill="none"/><path d="M461.5 35V37M461.5 40V43M461.5 46V49M461.5 52V55M461.5 58V61M461.5 64V67M461.5 70V73M461.5 76V79M461.5 82V85M461.5 88V91M461.5 94V97M461.5 100V103M461.5 106V109M461.5 112V115M461.5 118V121M461.5 124V127M461.5 130V133M461.5 136V139M461.5 142V145M461.5 148V151M461.5 154V157M461.5 160V163M461.5 166V169M461.5 172V175M461.5 178V181M461.5 184V187M461.5 190V193M461.5 196V199M461.5 202V205M461.5 208V211M461.5 214V217M461.5 220V223M461.5 226V229M461.5 232V235M461.5 238V241M461.5 244V247M461.5 250V253M461.5 256V259M461.5 262V265M461.5 268V271M461.5 274V277M461.5 280V283M461.5 286V289M461.5 292V295M461.5 298V301M461.5 304V307M461.5 310V313M461.5 316V319M461.5 322V325M461.5 328V331M461.5 334V337M461.5 340V343M461.5 346V349M461.5 352V355M461.5 358V361M461.5 364V367M461.5 370V373M461.5 376V377" stroke="#778899" stroke-width="1" fill="none"/><path d="M461.5 382V385M461.5 388V391M461.5 394V397M461.5 400V403M461.5 406V409M461.5 412V415M461.5 418V421M461.5 424V427M461.5 430V433M461.5 436V439M461.5 442V445M461.5 448V451M461.5 454V457M461.5 460V463M461.5 466V469M461.5 472V475M461.5 478V481M461.5 484V487M461.5 490V493M461.5 496V499M461.5 502V505M461.5 508V511M461.5 514V517M461.5 520V523M461.5 526V529M461.5 532V535M461.5 538V541M461.5 544V547M461.5 550V552" stroke="#778899" stroke-width="1" fill="none"/><path d="M493.5 35V37M493.5 40V43M493.5 46V49M493.5 52V55M493.5 58V61M493.5 64V67M493.5 70V73M493.5 76V79M493.5 82V85M493.5 88V91M493.5 94V97M493.5 100V103M493.5 106V109M493.5 112V115M493.5 118V121M493.5 124V127M493.5 130V133M493.5 136V139M493.5 142V145M493.5 148V151M493.5 154V157M493.5 160V163M493.5 166V169M493.5 172V175M493.5 178V181M493.5 184V187M493.5 190V193M493.5 196V199M493.5 202V205M493.5 208V211M493.5 214V217M493.5 220V223M493.5 226V229M493.5 232V235M493.5 238V241M493.5 244V247M493.5 250V253M493.5 256V259M493.5 262V265M493.5 268V271M493.5 274V277M493.5 280V283M493.5 286V289M493.5 292V295M493.5 298V301M493.5 304V307M493.5 310V313M493.5 316V319M493.5 322V325M493.5 328V331M493.5 334V337M493.5 340V343M493.5 346V349M493.5 352V355M493.5 358V361M493.5 364V367M493.5 370V373M493.5 376V377" stroke="#778899" stroke-width="1" fill="none"/><path d="M493.5 382V385M493.5 388V391M493.5 394V397M493.5 400V403M493.5 406V409M493.5 412V415M493.5 418V421M493.5 424V427M493.5 430V433M493.5 436V439M493.5 442V445M493.5 448V451M493.5 454V457M493.5 460V463M493.5 466V469M493.5 472V475M493.5 478V481M493.5 484V487M493.5 490V493M493.5 496V499M493.5 502V505M493.5 508V511M493.5 514V517M493.5 520V523M493.5 526V529M493.5 532V535M493.5 538V541M493.5 544V547M493.5 550V552" stroke="#778899" stroke-width="1" fill="none"/><path d="M525.5 35V37M525.5 40V43M525.5 46V49M525.5 52V55M525.5 58V61M525.5 64V67M525.5 70V73M525.5 76V79M525.5 82V85M525.5 88V91M525.5 94V97M525.5 100V103M525.5 106V109M525.5 112V115M525.5 118V121M525.5 124V127M525.5 130V133M525.5 136V139M525.5 142V145M525.5 148V151M525.5 154V157M525.5 160V163M525.5 166V169M525.5 172V175M525.5 178V181M525.5 184V187M525.5 190V193M525.5 196V199M525.5 202V205M525.5 208V211M525.5 214V217M525.5 220V223M525.5 226V229M525.5 232V235M525.5 238V241M525.5 244V247M525.5 250V253M525.5 256V259M525.5 262V265M525.5 268V271M525.5 274V277M525.5 280V283M525.5 286V289M525.5 292V295M525.5 298V301M525.5 304V307M525.5 310V313M525.5 316V319M525.5 322V325M525.5 328V331M525.5 334V337M525.5 340V343M525.5 346V349M525.5 352V355M525.5 358V361M525.5 364V367M525.5 370V373M525.5 376V377" stroke="#778899" stroke-width="1" fill="none"/><path d="M525.5 382V385M525.5 388V391M525.5 394V397M525.5 400V403M525.5 406V409M525.5 412V415M525.5 418V421M525.5 424V427M525.5 430V433M525.5 436V439M525.5 442V445M525.5 448V451M525.5 454V457M525.5 460V463M525.5 466V469M525.5 472V475M525.5 478V481M525.5 484V487M525.5 490V493M525.5 496V499M525.5 502V505M525.5 508V511M525.5 514V517M525.5 520V523M525.5 526V529M525.5 532V535M525.5 538V541M525.5 544V547M525.5 550V552" stroke="#778899" stroke-width="1" fill="none"/><path d="M557.5 35V37M557.5 40V43M557.5 46V49M557.5 52V55M557.5 58V61M557.5 64V67M557.5 70V73M557.5 76V79M557.5 82V85M557.5 88V91M557.5 94V97M557.5 100V103M557.5 106V109M557.5 112V115M557.5 118V121M557.5 124V127M557.5 130V133M557.5 136V139M557.5 142V145M557.5 148V151M557.5 154V157M557.5 160V163M557.5 166V169M557.5 172V175M557.5 178V181M557.5 184V187M557.5 190V193M557.5 196V199M557.5 202V205M557.5 208V211M557.5 214V217M557.5 220V223M557.5 226V229M557.5 232V235M557.5 238V241M557.5 244V247M557.5 250V253M557.5 256V259M557.5 262V265M557.5 268V271M557.5 274V277M557.5 280V283M557.5 286V289M557.5 292V295M557.5 298V301M557.5 304V307M557.5 310V313M557.5 316V319M557.5 322V325M557.5 328V331M557.5 334V337M557.5 340V343M557.5 346V349M557.5 352V355M557.5 358V361M557.5 364V367M557.5 370V373M557.5 376V377" stroke="#778899" stroke-width="1" fill="none"/><path d="M557.5 382V385M557.5 388V391M557.5 394V397M557.5 400V403M557.5 406V409M557.5 412V415M557.5 418V421M557.5 424V427M557.5 430V433M557.5 436V439M557.5 442V445M557.5 448V451M557.5 454V457M557.5 460V463M557.5 466V469M557.5 472V475M557.5 478V481M557.5 484V487M557.5 490V493M557.5 496V499M557.5 502V505M557.5 508V511M557.5 514V517M557.5 520V523M557.5 526V529M557.5 532V535M557.5 538V541M557.5 544V547M557.5 550V552" stroke="#778899" stroke-width="1" fill="none"/><path d="M589.5 35V37M589.5 40V43M589.5 46V49M589.5 52V55M589.5 58V61M589.5 64V67M589.5 70V73M589.5 76V79M589.5 82V85M589.5 88V91M589.5 94V97M589.5 100V103M589.5 106V109M589.5 112V115M589.5 118V121M589.5 124V127M589.5 130V133M589.5 136V139M589.5 142V145M589.5 148V151M589.5 154V157M589.5 160V163M589.5 166V169M589.5 172V175M589.5 178V181M589.5 184V187M589.5 190V193M589.5 196V199M589.5 202V205M589.5 208V211M589.5 214V217M589.5 220V223M589.5 226V229M589.5 232V235M589.5 238V241M589.5 244V247M589.5 250V253M589.5 256V259M589.5 262V265M589.5 268V271M589.5 274V277M589.5 280V283M589.5 286V289M589.5 292V295M589.5 298V301M589.5 304V307M589.5 310V313M589.5 316V319M589.5 322V325M589.5 328V331M589.5 334V337M589.5 340V343M589.5 346V349M589.5 352V355M589.5 358V361M589.5 364V367M589.5 370V373M589.5 376V377" stroke="#778899" stroke-width="1" fill="none"/><path d="M589.5 382V385M589.5 388V391M589.5 394V397M589.5 400V403M589.5 406V409M589.5 412V415M589.5 418V421M589.5 424V427M589.5 430V433M589.5 436V439M589.5 442V445M589.5 448V451M589.5 454V457M589.5 460V463M589.5 466V469M589.5 472V475M589.5 478V481M589.5 484V487M589.5 490V493M589.5 496V499M589.5 502V505M589.5 508V511M589.5 514V517M589.5 520V523M589.5 526V529M589.5 532V535M589.5 538V541M589.5 544V547M589.5 550V552" stroke="#778899" stroke-width="1" fill="none"/><path d="M621.5 35V37M621.5 40V43M621.5 46V49M621.5 52V55M621.5 58V61M621.5 64V67M621.5 70V73M621.5 76V79M621.5 82V85M621.5 88V91M621.5 94V97M621.5 100V103M621.5 106V109M621.5 112V115M621.5 118V121M621.5 124V127M621.5 130V133M621.5 136V139M621.5 142V145M621.5 148V151M621.5 154V157M621.5 160V163M621.5 166V169M621.5 172V175M621.5 178V181M621.5 184V187M621.5 190V193M621.5 196V199M621.5 202V205M621.5 208V211M621.5 214V217M621.5 220V223M621.5 226V229M621.5 232V235M621.5 238V241M621.5 244V247M621.5 250V253M621.5 256V259M621.5 262V265M621.5 268V271M621.5 274V277M621.5 280V283M621.5 286V289M621.5 292V295M621.5 298V301M621.5 304V307M621.5 310V313M621.5 316V319M621.5 322V325M621.5 328V331M621.5 334V337M621.5 340V343M621.5 346V349M621.5 352V355M621.5 358V361M621.5 364V367M621.5 370V373M621.5 376V377" stroke="#778899" stroke-width="1" fill="none"/><path d="M621.5 382V385M621.5 388V391M621.5 394V397M621.5 400V403M621.5 406V409M621.5 412V415M621.5 418V421M621.5 424V427M621.5 430V433M621.5 436V439M621.5 442V445M621.5 448V451M621.5 454V457M621.5 460V463M621.5 466V469M621.5 472V475M621.5 478V481M621.5 484V487M621.5 490V493M621.5 496V499M621.5 502V505M621.5 508V511M621.5 514V517M621.5 520V523M621.5 526V529M621.5 532V535M621.5 538V541M621.5 544V547M621.5 550V552" stroke="#778899" stroke-width="1" fill="none"/><path d="M653.5 35V37M653.5 40V43M653.5 46V49M653.5 52V55M653.5 58V61M653.5 64V67M653.5 70V73M653.5 76V79M653.5 82V85M653.5 88V91M653.5 94V97M653.5 100V103M653.5 106V109M653.5 112V115M653.5 118V121M653.5 124V127M653.5 130V133M653.5 136V139M653.5 142V145M653.5 148V151M653.5 154V157M653.5 160V163M653.5 166V169M653.5 172V175M653.5 178V181M653.5 184V187M653.5 190V193M653.5 196V199M653.5 202V205M653.5 208V211M653.5 214V217M653.5 220V223M653.5 226V229M653.5 232V235M653.5 238V241M653.5 244V247M653.5 250V253M653.5 256V259M653.5 262V265M653.5 268V271M653.5 274V277M653.5 280V283M653.5 286V289M653.5 292V295M653.5 298V301M653.5 304V307M653.5 310V313M653.5 316V319M653.5 322V325M653.5 328V331M653.5 334V337M653.5 340V343M653.5 346V349M653.5 352V355M653.5 358V361M653.5 364V367M653.5 370V373M653.5 376V377" stroke="#778899" stroke-width="1" fill="none"/><path d="M653.5 382V385M653.5 388V391M653.5 394V397M653.5 400V403M653.5 406V409M653.5 412V415M653.5 418V421M653.5 424V427M653.5 430V433M653.5 436V439M653.5 442V445M653.5 448V451M653.5 454V457M653.5 460V463M653.5 466V469M653.5 472V475M653.5 478V481M653.5 484V487M653.5 490V493M653.5 496V499M653.5 502V505M653.5 508V511M653.5 514V517M653.5 520V523M653.5 526V529M653.5 532V535M653.5 538V541M653.5 544V547M653.5 550V552" stroke="#778899" stroke-width="1" fill="none"/><path d="M14 474.5H17M20 474.5H23M26 474.5H29M32 474.5H35M38 474.5H41M44 474.5H47M50 474.5H53M56 474.5H59M62 474.5H65M68 474.5H71M74 474.5H77M80 474.5H83M86 474.5H89M92 474.5H95M98 474.5H101M104 474.5H107M110 474.5H113M116 474.5H119M122 474.5H125M128 474.5H131M134 474.5H137M140 474.5H143M146 474.5H149M152 474.5H155M158 474.5H161M164 474.5H167M170 474.5H173M176 474.5H179M182 474.5H185M188 474.5H191M194 474.5H197M200 474.5H203M206 474.5H209M212 474.5H215M218 474.5H221M224 474.5H227M230 474.5H233M236 474.5H239M242 474.5H245M248 474.5H251M254 474.5H257M260 474.5H263M266 474.5H269M272 474.5H275M278 474.5H281M284 474.5H287M290 474.5H293M296 474.5H299M302 474.5H305M308 474.5H311M314 474.5H317M320 474.5H323M326 474.5H329M332 474.5H335M338 474.5H341M344 474.5H347M350 474.5H353M356 474.5H359M362 474.5H365M368 474.5H371M374 474.5H377M380 474.5H383M386 474.5H389M392 474.5H395M398 474.5H401M404 474.5H407M410 474.5H413M416 474.5H419M422 474.5H425M428 474.5H431M434 474.5H437M440 474.5H443M446 474.5H449M452 474.5H455M458 474.5H461M464 474.5H467M470 474.5H473M476 474.5H479M482 474.5H485M488 474.5H491M494 474.5H497M500 474.5H503M506 474.5H509M512 474.5H515M518 474.5H521M524 474.5H527M530 474.5H533M536 474.5H539M542 474.5H545M548 474.5H551M554 474.5H557M560 474.5H563M566 474.5H569M572 474.5H575M578 474.5H581M584 474.5H587M590 474.5H593M596 474.5H599M602 474.5H605M608 474.5H611M614 474.5H617M620 474.5H623M626 474.5H629M632 474.5H635M638 474.5H641M644 474.5H647M650 474.5H653M656 474.5H659M662 474.5H665M668 474.5H671M674 474.5H677" stroke="#778899" stroke-width="1" fill="none"/><g clip-path="url(#cm)"><rect x="13" y="328" width="1" height="6" fill="#00ff00"/><rect x="13" y="342" width="1" height="5" fill="#00ff00"/><rect x="8" y="334" width="11" height="8" fill="#00ff00"/><rect x="9" y="335" width="9" height="6" fill="#ffffff"/><rect x="29" y="333" width="1" height="3" fill="#00ff00"/><rect x="29" y="342" width="1" height="4" fill="#00ff00"/><rect x="24" y="336" width="11" height="6" fill="#00ff00"/><rect x="25" y="337" width="9" height="4" fill="#000000"/><rect x="45" y="327" width="1" height="9" fill="#00ff00"/><rect x="45" y="340" width="1" height="4" fill="#00ff00"/><rect x="40" y="336" width="11" height="4" fill="#00ff00"/><rect x="41" y="337" width="9" height="2" fill="#ffffff"/><rect x="61" y="321" width="1" height="7" fill="#00ff00"/><rect x="61" y="339" width="1" height="1" fill="#00ff00"/><rect x="56" y="328" width="11" height="11" fill="#00ff00"/><rect x="57" y="329" width="9" height="9" fill="#000000"/><rect x="77" y="358" width="1" height="9" fill="#00ff00"/><rect x="72" y="328" width="11" height="30" fill="#00ff00"/><rect x="73" y="329" width="9" height="28" fill="#ffffff"/><rect x="93" y="311" width="1" height="14" fill="#00ff00"/><rect x="93" y="357" width="1" height="12" fill="#00ff00"/><rect x="88" y="325" width="11" height="32" fill="#00ff00"/><rect x="89" y="326" width="9" height="30" fill="#000000"/><rect x="109" y="243" width="1" height="37" fill="#00ff00"/><rect x="109" y="326" width="1" height="22" fill="#00ff00"/><rect x="104" y="280" width="11" height="46" fill="#00ff00"/><rect x="105" y="281" width="9" height="44" fill="#000000"/><rect x="125" y="258" width="1" height="4" fill="#00ff00"/><rect x="125" y="281" width="1" height="15" fill="#00ff00"/><rect x="120" y="262" width="11" height="19" fill="#00ff00"/><rect x="121" y="263" width="9" height="17" fill="#000000"/><rect x="141" y="263" width="1" height="4" fill="#00ff00"/><rect x="136" y="246" width="11" height="17" fill="#00ff00"/><rect x="137" y="247" width="9" height="15" fill="#000000"/><rect x="157" y="231" width="1" height="1" fill="#00ff00"/><rect x="157" y="248" width="1" height="10" fill="#00ff00"/><rect x="152" y="232" width="11" height="16" fill="#00ff00"/><rect x="153" y="233" width="9" height="14" fill="#000000"/><rect x="173" y="220" width="1" height="12" fill="#00ff00"/><rect x="173" y="234" width="1" height="7" fill="#00ff00"/><rect x="168" y="232" width="11" height="2" fill="#00ff00"/><rect x="189" y="204" width="1" height="11" fill="#00ff00"/><rect x="184" y="215" width="11" height="17" fill="#00ff00"/><rect x="185" y="216" width="9" height="15" fill="#000000"/><rect x="205" y="203" width="1" height="11" fill="#00ff00"/><rect x="205" y="260" width="1" height="11" fill="#00ff00"/><rect x="200" y="214" width="11" height="46" fill="#00ff00"/><rect x="201" y="215" width="9" height="44" fill="#ffffff"/><rect x="221" y="226" width="1" height="10" fill="#00ff00"/><rect x="216" y="236" width="11" height="24" fill="#00ff00"/><rect x="217" y="237" width="9" height="22" fill="#000000"/><rect x="237" y="220" width="1" height="16" fill="#00ff00"/><rect x="237" y="237" width="1" height="11" fill="#00ff00"/><rect x="232" y="236" width="11" height="1" fill="#00ff00"/><rect x="253" y="218" width="1" height="16" fill="#00ff00"/><rect x="253" y="237" width="1" height="1" fill="#00ff00"/><rect x="248" y="234" width="11" height="3" fill="#00ff00"/><rect x="249" y="235" width="9" height="1" fill="#000000"/><rect x="269" y="223" width="1" height="5" fill="#00ff00"/><rect x="269" y="235" width="1" height="12" fill="#00ff00"/><rect x="264" y="228" width="11" height="7" fill="#00ff00"/><rect x="265" y="229" width="9" height="5" fill="#000000"/><rect x="285" y="200" width="1" height="4" fill="#00ff00"/><rect x="285" y="229" width="1" height="10" fill="#00ff00"/><rect x="280" y="204" width="11" height="25" fill="#00ff00"/><rect x="281" y="205" width="9" height="23" fill="#000000"/><rect x="301" y="196" width="1" height="9" fill="#00ff00"/><rect x="301" y="220" width="1" height="5" fill="#00ff00"/><rect x="296" y="205" width="11" height="15" fill="#00ff00"/><rect x="297" y="206" width="9" height="13" fill="#ffffff"/><rect x="317" y="189" width="1" height="10" fill="#00ff00"/><rect x="317" y="220" width="1" height="21" fill="#00ff00"/><rect x="312" y="199" width="11" height="21" fill="#00ff00"/><rect x="313" y="200" width="9" height="19" fill="#000000"/><rect x="333" y="192" width="1" height="8" fill="#00ff00"/><rect x="333" y="204" width="1" height="17" fill="#00ff00"/><rect x="328" y="200" width="11" height="4" fill="#00ff00"/><rect x="329" y="201" width="9" height="2" fill="#ffffff"/><rect x="349" y="194" width="1" height="9" fill="#00ff00"/><rect x="349" y="205" width="1" height="3" fill="#00ff00"/><rect x="344" y="203" width="11" height="2" fill="#00ff00"/><rect x="365" y="190" width="1" height="15" fill="#00ff00"/><rect x="365" y="208" width="1" height="3" fill="#00ff00"/><rect x="360" y="205" width="11" height="3" fill="#00ff00"/><rect x="361" y="206" width="9" height="1" fill="#ffffff"/><rect x="381" y="104" width="1" height="13" fill="#00ff00"/><rect x="381" y="208" width="1" height="27" fill="#00ff00"/><rect x="376" y="117" width="11" height="91" fill="#00ff00"/><rect x="377" y="118" width="9" height="89" fill="#000000"/><rect x="397" y="102" width="1" height="15" fill="#00ff00"/><rect x="397" y="145" width="1" height="17" fill="#00ff00"/><rect x="392" y="117" width="11" height="28" fill="#00ff00"/><rect x="393" y="118" width="9" height="26" fill="#ffffff"/><rect x="413" y="132" width="1" height="6" fill="#00ff00"/><rect x="413" y="145" width="1" height="2" fill="#00ff00"/><rect x="408" y="138" width="11" height="7" fill="#00ff00"/><rect x="409" y="139" width="9" height="5" fill="#000000"/><rect x="429" y="136" width="1" height="5" fill="#00ff00"/><rect x="429" y="147" width="1" height="17" fill="#00ff00"/><rect x="424" y="141" width="11" height="6" fill="#00ff00"/><rect x="425" y="142" width="9" height="4" fill="#000000"/><rect x="445" y="131" width="1" height="10" fill="#00ff00"/><rect x="445" y="143" width="1" height="3" fill="#00ff00"/><rect x="440" y="141" width="11" height="2" fill="#00ff00"/><rect x="461" y="123" width="1" height="5" fill="#00ff00"/><rect x="461" y="143" width="1" height="3" fill="#00ff00"/><rect x="456" y="128" width="11" height="15" fill="#00ff00"/><rect x="457" y="129" width="9" height="13" fill="#000000"/><rect x="477" y="106" width="1" height="13" fill="#00ff00"/><rect x="477" y="129" width="1" height="8" fill="#00ff00"/><rect x="472" y="119" width="11" height="10" fill="#00ff00"/><rect x="473" y="120" width="9" height="8" fill="#000000"/><rect x="493" y="100" width="1" height="7" fill="#00ff00"/><rect x="493" y="120" width="1" height="5" fill="#00ff00"/><rect x="488" y="107" width="11" height="13" fill="#00ff00"/><rect x="489" y="108" width="9" height="11" fill="#000000"/><rect x="509" y="93" width="1" height="13" fill="#00ff00"/><rect x="509" y="114" width="1" height="2" fill="#00ff00"/><rect x="504" y="106" width="11" height="8" fill="#00ff00"/><rect x="505" y="107" width="9" height="6" fill="#ffffff"/><rect x="525" y="133" width="1" height="6" fill="#00ff00"/><rect x="520" y="113" width="11" height="20" fill="#00ff00"/><rect x="521" y="114" width="9" height="18" fill="#ffffff"/><rect x="541" y="127" width="1" height="5" fill="#00ff00"/><rect x="541" y="134" width="1" height="3" fill="#00ff00"/><rect x="536" y="132" width="11" height="2" fill="#00ff00"/><rect x="557" y="122" width="1" height="2" fill="#00ff00"/><rect x="557" y="133" width="1" height="6" fill="#00ff00"/><rect x="552" y="124" width="11" height="9" fill="#00ff00"/><rect x="553" y="125" width="9" height="7" fill="#000000"/><rect x="573" y="101" width="1" height="7" fill="#00ff00"/><rect x="573" y="125" width="1" height="4" fill="#00ff00"/><rect x="568" y="108" width="11" height="17" fill="#00ff00"/><rect x="569" y="109" width="9" height="15" fill="#000000"/><rect x="589" y="71" width="1" height="14" fill="#00ff00"/><rect x="589" y="108" width="1" height="11" fill="#00ff00"/><rect x="584" y="85" width="11" height="23" fill="#00ff00"/><rect x="585" y="86" width="9" height="21" fill="#000000"/><rect x="605" y="81" width="1" height="4" fill="#00ff00"/><rect x="605" y="88" width="1" height="14" fill="#00ff00"/><rect x="600" y="85" width="11" height="3" fill="#00ff00"/><rect x="601" y="86" width="9" height="1" fill="#ffffff"/><rect x="621" y="68" width="1" height="15" fill="#00ff00"/><rect x="621" y="88" width="1" height="2" fill="#00ff00"/><rect x="616" y="83" width="11" height="5" fill="#00ff00"/><rect x="617" y="84" width="9" height="3" fill="#000000"/><rect x="637" y="78" width="1" height="4" fill="#00ff00"/><rect x="637" y="123" width="1" height="33" fill="#00ff00"/><rect x="632" y="82" width="11" height="41" fill="#00ff00"/><rect x="633" y="83" width="9" height="39" fill="#ffffff"/><rect x="653" y="52" width="1" height="7" fill="#00ff00"/><rect x="653" y="124" width="1" height="8" fill="#00ff00"/><rect x="648" y="59" width="11" height="65" fill="#00ff00"/><rect x="649" y="60" width="9" height="63" fill="#000000"/><rect x="669" y="35" width="1" height="7" fill="#00ff00"/><rect x="669" y="60" width="1" height="31" fill="#00ff00"/><rect x="664" y="42" width="11" height="18" fill="#00ff00"/><rect x="665" y="43" width="9" height="16" fill="#000000"/></g><g shape-rendering="auto" fill="#87cefa" stroke="none"><polygon points="140.8,272 151.3,282.8 150.6,285 140.8,275.3 131,285 130.3,282.8"/><rect x="139.1" y="273.5" width="3.8" height="20.5"/></g><g shape-rendering="auto" fill="#87cefa" stroke="none"><polygon points="348.8,212 359.3,222.8 358.6,225 348.8,215.3 339,225 338.3,222.8"/><rect x="347.1" y="213.5" width="3.8" height="20.5"/></g><polygon points="124.50,297.30 126.15,301.64 130.74,300.90 127.80,304.50 130.74,308.10 126.15,307.36 124.50,311.70 122.85,307.36 118.26,308.10 121.20,304.50 118.26,300.90 122.85,301.64" fill="#87cefa" shape-rendering="auto"/><polygon points="333.50,219.80 335.15,224.14 339.74,223.40 336.80,227.00 339.74,230.60 335.15,229.86 333.50,234.20 331.85,229.86 327.26,230.60 330.20,227.00 327.26,223.40 331.85,224.14" fill="#87cefa" shape-rendering="auto"/><g clip-path="url(#ci)"><polyline points="13.5,531 29.5,525 45.5,528 61.5,507.5 77.5,535 93.5,506 109.5,461 125.5,425 141.5,410 157.5,405 173.5,400 189.5,397.5 205.5,411 221.5,421 237.5,436 253.5,456 269.5,462 285.5,458 301.5,445 317.5,426 333.5,399.5 349.5,411 365.5,422 381.5,422 397.5,423 413.5,425.5 429.5,418.5 445.5,426.5 461.5,427 477.5,430 493.5,429 509.5,430 525.5,415.5 541.5,435.5 557.5,447 573.5,451.5 589.5,451.5 605.5,442 621.5,426.5 637.5,430 653.5,412 669.5,410.5" stroke="#ff0000" stroke-width="2" fill="none" stroke-linejoin="miter" shape-rendering="crispEdges"/><polyline points="13.5,512 29.5,518.5 45.5,525 61.5,531 77.5,536.5 93.5,538 109.5,536.5 125.5,532.5 141.5,528 157.5,519 173.5,508 189.5,492 205.5,486 221.5,475 237.5,461 253.5,447.5 269.5,432 285.5,420.5 301.5,415 317.5,410 333.5,407 349.5,407 365.5,405 381.5,403 397.5,401 413.5,401 429.5,401 445.5,401 461.5,401.5 477.5,402 493.5,402 509.5,403 525.5,403.5 541.5,405 557.5,405 573.5,405 589.5,404 605.5,402 621.5,402 637.5,405 653.5,405 669.5,404.5" stroke="#00ffff" stroke-width="2" fill="none" stroke-linejoin="miter" shape-rendering="crispEdges"/><polyline points="13.5,537.5 29.5,537.5 45.5,537.5 61.5,538.5 77.5,538.5 93.5,538.5 109.5,537.5 125.5,535.5 141.5,532.5 157.5,528.5 173.5,524.5 189.5,519.5 205.5,514.5 221.5,511 237.5,507.5 253.5,502 269.5,496.5 285.5,489 301.5,481 317.5,476 333.5,471 349.5,469 365.5,460 381.5,455 397.5,451 413.5,448.5 429.5,446 445.5,443.5 461.5,442 477.5,439.5 493.5,437 509.5,435.5 525.5,434 541.5,431 557.5,428 573.5,423 589.5,418.5 605.5,416 621.5,413 637.5,410 653.5,406.5 669.5,405" stroke="#ffff00" stroke-width="2" fill="none" stroke-linejoin="miter" shape-rendering="crispEdges"/></g><path d="M14 396.5H17M20 396.5H23M26 396.5H29M32 396.5H35M38 396.5H41M44 396.5H47M50 396.5H53M56 396.5H59M62 396.5H65M68 396.5H71M74 396.5H77M80 396.5H83M86 396.5H89M92 396.5H95M98 396.5H101M104 396.5H107M110 396.5H113M116 396.5H119M122 396.5H125M128 396.5H131M134 396.5H137M140 396.5H143M146 396.5H149M152 396.5H155M158 396.5H161M164 396.5H167M170 396.5H173M176 396.5H179M182 396.5H185M188 396.5H191M194 396.5H197M200 396.5H203M206 396.5H209M212 396.5H215M218 396.5H221M224 396.5H227M230 396.5H233M236 396.5H239M242 396.5H245M248 396.5H251M254 396.5H257M260 396.5H263M266 396.5H269M272 396.5H275M278 396.5H281M284 396.5H287M290 396.5H293M296 396.5H299M302 396.5H305M308 396.5H311M314 396.5H317M320 396.5H323M326 396.5H329M332 396.5H335M338 396.5H341M344 396.5H347M350 396.5H353M356 396.5H359M362 396.5H365M368 396.5H371M374 396.5H377M380 396.5H383M386 396.5H389M392 396.5H395M398 396.5H401M404 396.5H407M410 396.5H413M416 396.5H419M422 396.5H425M428 396.5H431M434 396.5H437M440 396.5H443M446 396.5H449M452 396.5H455M458 396.5H461M464 396.5H467M470 396.5H473M476 396.5H479M482 396.5H485M488 396.5H491M494 396.5H497M500 396.5H503M506 396.5H509M512 396.5H515M518 396.5H521M524 396.5H527M530 396.5H533M536 396.5H539M542 396.5H545M548 396.5H551M554 396.5H557M560 396.5H563M566 396.5H569M572 396.5H575M578 396.5H581M584 396.5H587M590 396.5H593M596 396.5H599M602 396.5H605M608 396.5H611M614 396.5H617M620 396.5H623M626 396.5H629M632 396.5H635M638 396.5H641M644 396.5H647M650 396.5H653M656 396.5H659M662 396.5H665M668 396.5H671M674 396.5H677" stroke="#c8c8c8" stroke-width="1" fill="none"/><path d="M14 412.5H17M20 412.5H23M26 412.5H29M32 412.5H35M38 412.5H41M44 412.5H47M50 412.5H53M56 412.5H59M62 412.5H65M68 412.5H71M74 412.5H77M80 412.5H83M86 412.5H89M92 412.5H95M98 412.5H101M104 412.5H107M110 412.5H113M116 412.5H119M122 412.5H125M128 412.5H131M134 412.5H137M140 412.5H143M146 412.5H149M152 412.5H155M158 412.5H161M164 412.5H167M170 412.5H173M176 412.5H179M182 412.5H185M188 412.5H191M194 412.5H197M200 412.5H203M206 412.5H209M212 412.5H215M218 412.5H221M224 412.5H227M230 412.5H233M236 412.5H239M242 412.5H245M248 412.5H251M254 412.5H257M260 412.5H263M266 412.5H269M272 412.5H275M278 412.5H281M284 412.5H287M290 412.5H293M296 412.5H299M302 412.5H305M308 412.5H311M314 412.5H317M320 412.5H323M326 412.5H329M332 412.5H335M338 412.5H341M344 412.5H347M350 412.5H353M356 412.5H359M362 412.5H365M368 412.5H371M374 412.5H377M380 412.5H383M386 412.5H389M392 412.5H395M398 412.5H401M404 412.5H407M410 412.5H413M416 412.5H419M422 412.5H425M428 412.5H431M434 412.5H437M440 412.5H443M446 412.5H449M452 412.5H455M458 412.5H461M464 412.5H467M470 412.5H473M476 412.5H479M482 412.5H485M488 412.5H491M494 412.5H497M500 412.5H503M506 412.5H509M512 412.5H515M518 412.5H521M524 412.5H527M530 412.5H533M536 412.5H539M542 412.5H545M548 412.5H551M554 412.5H557M560 412.5H563M566 412.5H569M572 412.5H575M578 412.5H581M584 412.5H587M590 412.5H593M596 412.5H599M602 412.5H605M608 412.5H611M614 412.5H617M620 412.5H623M626 412.5H629M632 412.5H635M638 412.5H641M644 412.5H647M650 412.5H653M656 412.5H659M662 412.5H665M668 412.5H671M674 412.5H677" stroke="#c8c8c8" stroke-width="1" fill="none"/><path d="M14 435.5H17M20 435.5H23M26 435.5H29M32 435.5H35M38 435.5H41M44 435.5H47M50 435.5H53M56 435.5H59M62 435.5H65M68 435.5H71M74 435.5H77M80 435.5H83M86 435.5H89M92 435.5H95M98 435.5H101M104 435.5H107M110 435.5H113M116 435.5H119M122 435.5H125M128 435.5H131M134 435.5H137M140 435.5H143M146 435.5H149M152 435.5H155M158 435.5H161M164 435.5H167M170 435.5H173M176 435.5H179M182 435.5H185M188 435.5H191M194 435.5H197M200 435.5H203M206 435.5H209M212 435.5H215M218 435.5H221M224 435.5H227M230 435.5H233M236 435.5H239M242 435.5H245M248 435.5H251M254 435.5H257M260 435.5H263M266 435.5H269M272 435.5H275M278 435.5H281M284 435.5H287M290 435.5H293M296 435.5H299M302 435.5H305M308 435.5H311M314 435.5H317M320 435.5H323M326 435.5H329M332 435.5H335M338 435.5H341M344 435.5H347M350 435.5H353M356 435.5H359M362 435.5H365M368 435.5H371M374 435.5H377M380 435.5H383M386 435.5H389M392 435.5H395M398 435.5H401M404 435.5H407M410 435.5H413M416 435.5H419M422 435.5H425M428 435.5H431M434 435.5H437M440 435.5H443M446 435.5H449M452 435.5H455M458 435.5H461M464 435.5H467M470 435.5H473M476 435.5H479M482 435.5H485M488 435.5H491M494 435.5H497M500 435.5H503M506 435.5H509M512 435.5H515M518 435.5H521M524 435.5H527M530 435.5H533M536 435.5H539M542 435.5H545M548 435.5H551M554 435.5H557M560 435.5H563M566 435.5H569M572 435.5H575M578 435.5H581M584 435.5H587M590 435.5H593M596 435.5H599M602 435.5H605M608 435.5H611M614 435.5H617M620 435.5H623M626 435.5H629M632 435.5H635M638 435.5H641M644 435.5H647M650 435.5H653M656 435.5H659M662 435.5H665M668 435.5H671M674 435.5H677" stroke="#c8c8c8" stroke-width="1" fill="none"/><path d="M14 513.5H17M20 513.5H23M26 513.5H29M32 513.5H35M38 513.5H41M44 513.5H47M50 513.5H53M56 513.5H59M62 513.5H65M68 513.5H71M74 513.5H77M80 513.5H83M86 513.5H89M92 513.5H95M98 513.5H101M104 513.5H107M110 513.5H113M116 513.5H119M122 513.5H125M128 513.5H131M134 513.5H137M140 513.5H143M146 513.5H149M152 513.5H155M158 513.5H161M164 513.5H167M170 513.5H173M176 513.5H179M182 513.5H185M188 513.5H191M194 513.5H197M200 513.5H203M206 513.5H209M212 513.5H215M218 513.5H221M224 513.5H227M230 513.5H233M236 513.5H239M242 513.5H245M248 513.5H251M254 513.5H257M260 513.5H263M266 513.5H269M272 513.5H275M278 513.5H281M284 513.5H287M290 513.5H293M296 513.5H299M302 513.5H305M308 513.5H311M314 513.5H317M320 513.5H323M326 513.5H329M332 513.5H335M338 513.5H341M344 513.5H347M350 513.5H353M356 513.5H359M362 513.5H365M368 513.5H371M374 513.5H377M380 513.5H383M386 513.5H389M392 513.5H395M398 513.5H401M404 513.5H407M410 513.5H413M416 513.5H419M422 513.5H425M428 513.5H431M434 513.5H437M440 513.5H443M446 513.5H449M452 513.5H455M458 513.5H461M464 513.5H467M470 513.5H473M476 513.5H479M482 513.5H485M488 513.5H491M494 513.5H497M500 513.5H503M506 513.5H509M512 513.5H515M518 513.5H521M524 513.5H527M530 513.5H533M536 513.5H539M542 513.5H545M548 513.5H551M554 513.5H557M560 513.5H563M566 513.5H569M572 513.5H575M578 513.5H581M584 513.5H587M590 513.5H593M596 513.5H599M602 513.5H605M608 513.5H611M614 513.5H617M620 513.5H623M626 513.5H629M632 513.5H635M638 513.5H641M644 513.5H647M650 513.5H653M656 513.5H659M662 513.5H665M668 513.5H671M674 513.5H677" stroke="#c8c8c8" stroke-width="1" fill="none"/><path d="M14 536.5H17M20 536.5H23M26 536.5H29M32 536.5H35M38 536.5H41M44 536.5H47M50 536.5H53M56 536.5H59M62 536.5H65M68 536.5H71M74 536.5H77M80 536.5H83M86 536.5H89M92 536.5H95M98 536.5H101M104 536.5H107M110 536.5H113M116 536.5H119M122 536.5H125M128 536.5H131M134 536.5H137M140 536.5H143M146 536.5H149M152 536.5H155M158 536.5H161M164 536.5H167M170 536.5H173M176 536.5H179M182 536.5H185M188 536.5H191M194 536.5H197M200 536.5H203M206 536.5H209M212 536.5H215M218 536.5H221M224 536.5H227M230 536.5H233M236 536.5H239M242 536.5H245M248 536.5H251M254 536.5H257M260 536.5H263M266 536.5H269M272 536.5H275M278 536.5H281M284 536.5H287M290 536.5H293M296 536.5H299M302 536.5H305M308 536.5H311M314 536.5H317M320 536.5H323M326 536.5H329M332 536.5H335M338 536.5H341M344 536.5H347M350 536.5H353M356 536.5H359M362 536.5H365M368 536.5H371M374 536.5H377M380 536.5H383M386 536.5H389M392 536.5H395M398 536.5H401M404 536.5H407M410 536.5H413M416 536.5H419M422 536.5H425M428 536.5H431M434 536.5H437M440 536.5H443M446 536.5H449M452 536.5H455M458 536.5H461M464 536.5H467M470 536.5H473M476 536.5H479M482 536.5H485M488 536.5H491M494 536.5H497M500 536.5H503M506 536.5H509M512 536.5H515M518 536.5H521M524 536.5H527M530 536.5H533M536 536.5H539M542 536.5H545M548 536.5H551M554 536.5H557M560 536.5H563M566 536.5H569M572 536.5H575M578 536.5H581M584 536.5H587M590 536.5H593M596 536.5H599M602 536.5H605M608 536.5H611M614 536.5H617M620 536.5H623M626 536.5H629M632 536.5H635M638 536.5H641M644 536.5H647M650 536.5H653M656 536.5H659M662 536.5H665M668 536.5H671M674 536.5H677" stroke="#c8c8c8" stroke-width="1" fill="none"/><rect x="10" y="379" width="2" height="174" fill="#000000"/><rect x="680" y="379" width="45" height="174" fill="#000000"/><rect x="680" y="32" width="45" height="346" fill="#000000"/><path d="M12.5 377.5V34.5H679.5V377.5Z" stroke="#ffffff" fill="none"/><path d="M12.5 552.5V379.5H679.5V552.5Z" stroke="#ffffff" fill="none"/><rect x="680" y="68" width="2" height="1" fill="#ffffff"/><rect x="680" y="102" width="2" height="1" fill="#ffffff"/><rect x="680" y="136" width="2" height="1" fill="#ffffff"/><rect x="680" y="170" width="2" height="1" fill="#ffffff"/><rect x="680" y="204" width="2" height="1" fill="#ffffff"/><rect x="680" y="238" width="2" height="1" fill="#ffffff"/><rect x="680" y="272" width="2" height="1" fill="#ffffff"/><rect x="680" y="305" width="2" height="1" fill="#ffffff"/><rect x="680" y="339" width="2" height="1" fill="#ffffff"/><rect x="680" y="373" width="2" height="1" fill="#ffffff"/><rect x="680" y="474" width="2" height="1" fill="#ffffff"/><rect x="680" y="380" width="1" height="1" fill="#ffffff"/><rect x="680" y="552" width="1" height="1" fill="#ffffff"/><rect x="13" y="553" width="1" height="3" fill="#ffffff"/><rect x="77" y="553" width="1" height="3" fill="#ffffff"/><rect x="141" y="553" width="1" height="3" fill="#ffffff"/><rect x="205" y="553" width="1" height="3" fill="#ffffff"/><rect x="269" y="553" width="1" height="3" fill="#ffffff"/><rect x="333" y="553" width="1" height="3" fill="#ffffff"/><rect x="397" y="553" width="1" height="3" fill="#ffffff"/><rect x="461" y="553" width="1" height="3" fill="#ffffff"/><rect x="525" y="553" width="1" height="3" fill="#ffffff"/><rect x="589" y="553" width="1" height="3" fill="#ffffff"/><rect x="653" y="553" width="1" height="3" fill="#ffffff"/><polygon points="13,546 13,552 19,552" fill="#778899" shape-rendering="auto"/><polygon points="16,41 23,41 19.5,45" fill="#ffffff" shape-rendering="auto"/><text x="28.5" y="45.6" font-family="Liberation Sans, sans-serif" font-size="10.2" fill="#ffffff" stroke="#ffffff" stroke-width="0.22" textLength="197.5" lengthAdjust="spacingAndGlyphs">USDJPY,H1&#160;&#160;115.253 115.264 115.195 115.198</text><text x="17.5" y="392" font-family="Liberation Sans, sans-serif" font-size="10.2" fill="#ffffff" stroke="#ffffff" stroke-width="0.22" textLength="111" lengthAdjust="spacingAndGlyphs">R(9,26,52) 58.3 -78.9 -31.4</text><text x="685.4" y="72" font-family="Liberation Sans, sans-serif" font-size="10.2" fill="#ffffff" stroke="#ffffff" stroke-width="0.22" textLength="32.4" lengthAdjust="spacingAndGlyphs">109.995</text><text x="685.4" y="106" font-family="Liberation Sans, sans-serif" font-size="10.2" fill="#ffffff" stroke="#ffffff" stroke-width="0.22" textLength="32.4" lengthAdjust="spacingAndGlyphs">109.895</text><text x="685.4" y="140" font-family="Liberation Sans, sans-serif" font-size="10.2" fill="#ffffff" stroke="#ffffff" stroke-width="0.22" textLength="32.4" lengthAdjust="spacingAndGlyphs">109.795</text><text x="685.4" y="174" font-family="Liberation Sans, sans-serif" font-size="10.2" fill="#ffffff" stroke="#ffffff" stroke-width="0.22" textLength="32.4" lengthAdjust="spacingAndGlyphs">109.695</text><text x="685.4" y="208" font-family="Liberation Sans, sans-serif" font-size="10.2" fill="#ffffff" stroke="#ffffff" stroke-width="0.22" textLength="32.4" lengthAdjust="spacingAndGlyphs">109.595</text><text x="685.4" y="242" font-family="Liberation Sans, sans-serif" font-size="10.2" fill="#ffffff" stroke="#ffffff" stroke-width="0.22" textLength="32.4" lengthAdjust="spacingAndGlyphs">109.495</text><text x="685.4" y="276" font-family="Liberation Sans, sans-serif" font-size="10.2" fill="#ffffff" stroke="#ffffff" stroke-width="0.22" textLength="32.4" lengthAdjust="spacingAndGlyphs">109.395</text><text x="685.4" y="309" font-family="Liberation Sans, sans-serif" font-size="10.2" fill="#ffffff" stroke="#ffffff" stroke-width="0.22" textLength="32.4" lengthAdjust="spacingAndGlyphs">109.300</text><text x="685.4" y="343" font-family="Liberation Sans, sans-serif" font-size="10.2" fill="#ffffff" stroke="#ffffff" stroke-width="0.22" textLength="32.4" lengthAdjust="spacingAndGlyphs">109.200</text><text x="685.4" y="377" font-family="Liberation Sans, sans-serif" font-size="10.2" fill="#ffffff" stroke="#ffffff" stroke-width="0.22" textLength="32.4" lengthAdjust="spacingAndGlyphs">109.100</text><text x="683" y="390.2" font-family="Liberation Sans, sans-serif" font-size="10.2" fill="#ffffff" stroke="#ffffff" stroke-width="0.22" textLength="15" lengthAdjust="spacingAndGlyphs">120</text><text x="682.5" y="399.7" font-family="Liberation Sans, sans-serif" font-size="10.2" fill="#ffffff" stroke="#ffffff" stroke-width="0.22" textLength="15" lengthAdjust="spacingAndGlyphs">100</text><text x="682" y="416" font-family="Liberation Sans, sans-serif" font-size="10.2" fill="#ffffff" stroke="#ffffff" stroke-width="0.22" textLength="10" lengthAdjust="spacingAndGlyphs">80</text><text x="682" y="439" font-family="Liberation Sans, sans-serif" font-size="10.2" fill="#ffffff" stroke="#ffffff" stroke-width="0.22" textLength="10" lengthAdjust="spacingAndGlyphs">50</text><text x="683" y="478" font-family="Liberation Sans, sans-serif" font-size="10.2" fill="#ffffff" stroke="#ffffff" stroke-width="0.22" textLength="18" lengthAdjust="spacingAndGlyphs">0.00</text><text x="682" y="517" font-family="Liberation Sans, sans-serif" font-size="10.2" fill="#ffffff" stroke="#ffffff" stroke-width="0.22" textLength="13" lengthAdjust="spacingAndGlyphs">-50</text><text x="682" y="540" font-family="Liberation Sans, sans-serif" font-size="10.2" fill="#ffffff" stroke="#ffffff" stroke-width="0.22" textLength="13" lengthAdjust="spacingAndGlyphs">-80</text><text x="683.3" y="549.4" font-family="Liberation Sans, sans-serif" font-size="10.2" fill="#ffffff" stroke="#ffffff" stroke-width="0.22" textLength="17.5" lengthAdjust="spacingAndGlyphs">-100</text><text x="12" y="565.4" font-family="Liberation Sans, sans-serif" font-size="10.2" fill="#ffffff" stroke="#ffffff" stroke-width="0.22" textLength="51.5" lengthAdjust="spacingAndGlyphs">21 Sep 2021</text><text x="76" y="565.4" font-family="Liberation Sans, sans-serif" font-size="10.2" fill="#ffffff" stroke="#ffffff" stroke-width="0.22" textLength="55" lengthAdjust="spacingAndGlyphs">22 Sep 02:00</text><text x="140" y="565.4" font-family="Liberation Sans, sans-serif" font-size="10.2" fill="#ffffff" stroke="#ffffff" stroke-width="0.22" textLength="55" lengthAdjust="spacingAndGlyphs">22 Sep 06:00</text><text x="204" y="565.4" font-family="Liberation Sans, sans-serif" font-size="10.2" fill="#ffffff" stroke="#ffffff" stroke-width="0.22" textLength="55" lengthAdjust="spacingAndGlyphs">22 Sep 10:00</text><text x="268" y="565.4" font-family="Liberation Sans, sans-serif" font-size="10.2" fill="#ffffff" stroke="#ffffff" stroke-width="0.22" textLength="55" lengthAdjust="spacingAndGlyphs">22 Sep 14:00</text><text x="332" y="565.4" font-family="Liberation Sans, sans-serif" font-size="10.2" fill="#ffffff" stroke="#ffffff" stroke-width="0.22" textLength="55" lengthAdjust="spacingAndGlyphs">22 Sep 18:00</text><text x="396" y="565.4" font-family="Liberation Sans, sans-serif" font-size="10.2" fill="#ffffff" stroke="#ffffff" stroke-width="0.22" textLength="55" lengthAdjust="spacingAndGlyphs">22 Sep 22:00</text><text x="460" y="565.4" font-family="Liberation Sans, sans-serif" font-size="10.2" fill="#ffffff" stroke="#ffffff" stroke-width="0.22" textLength="55" lengthAdjust="spacingAndGlyphs">23 Sep 02:00</text><text x="524" y="565.4" font-family="Liberation Sans, sans-serif" font-size="10.2" fill="#ffffff" stroke="#ffffff" stroke-width="0.22" textLength="55" lengthAdjust="spacingAndGlyphs">23 Sep 06:00</text><text x="588" y="565.4" font-family="Liberation Sans, sans-serif" font-size="10.2" fill="#ffffff" stroke="#ffffff" stroke-width="0.22" textLength="55" lengthAdjust="spacingAndGlyphs">23 Sep 10:00</text><text x="652" y="565.4" font-family="Liberation Sans, sans-serif" font-size="10.2" fill="#ffffff" stroke="#ffffff" stroke-width="0.22" textLength="55" lengthAdjust="spacingAndGlyphs">23 Sep 14:00</text></svg></body></html>
